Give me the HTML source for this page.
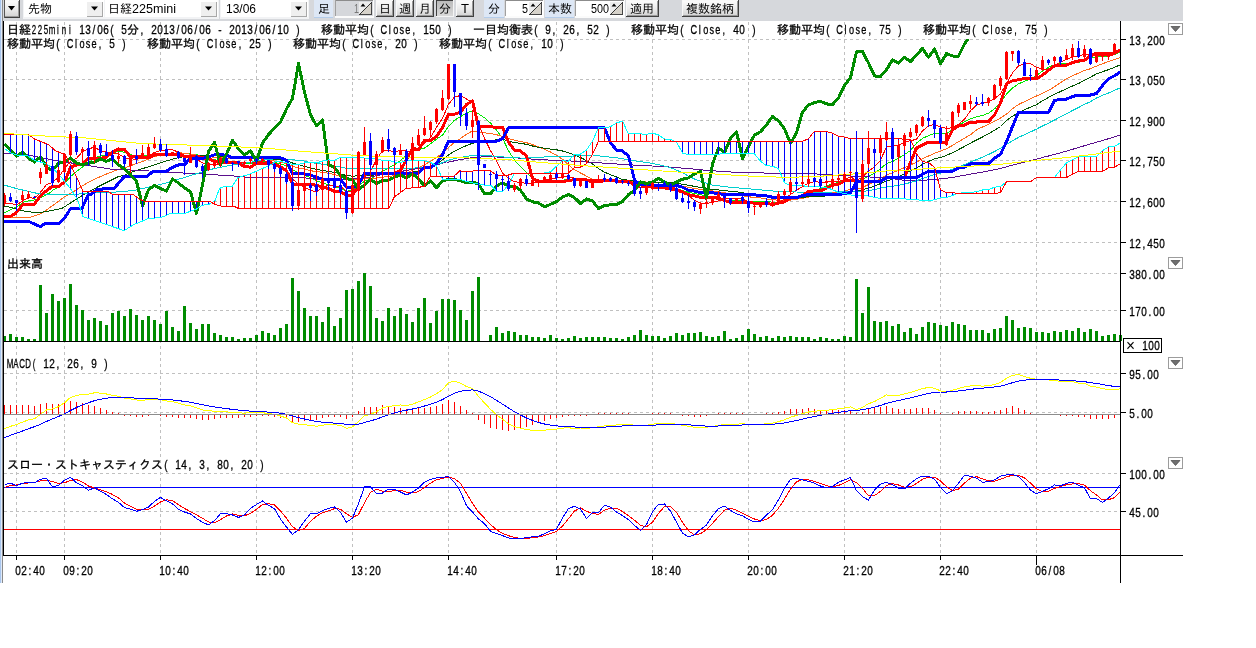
<!DOCTYPE html>
<html lang="ja"><head><meta charset="utf-8"><title>日経225mini チャート</title><style>html,body{margin:0;padding:0;background:#fff;overflow:hidden}svg text{white-space:pre}.k{font:12px "Liberation Mono","IPAGothic",monospace}.n,.h{font:12.5px "Liberation Sans","IPAGothic",sans-serif}.n{text-anchor:middle}.n,.h,.k{stroke:#000;stroke-width:.3px}#w{will-change:transform;width:1256px;height:648px}</style></head><body><div id="w"><svg width="1256" height="648" viewBox="0 0 1256 648" style="display:block">
<defs><linearGradient id="bg" x1="0" y1="0" x2="0" y2="1"><stop offset="0" stop-color="#fdfdfd"/><stop offset="0.5" stop-color="#ececec"/><stop offset="1" stop-color="#cfcfcf"/></linearGradient><linearGradient id="bp" x1="0" y1="0" x2="0" y2="1"><stop offset="0" stop-color="#b8b8b8"/><stop offset="1" stop-color="#dcdcdc"/></linearGradient></defs>
<rect x="0" y="0" width="1256" height="648" fill="#fff" />
<g shape-rendering="crispEdges">
<rect x="0" y="0" width="1183" height="21" fill="#d6d8dc" />
<rect x="0" y="0" width="1" height="583" fill="#a9c6ee" />
<rect x="1" y="0" width="1" height="583" fill="#dfe9f7" />
<rect x="2" y="0" width="1" height="583" fill="#8a8a8a" />
<rect x="4" y="0" width="16" height="18" fill="url(#bg)" />
<rect x="4" y="0" width="16" height="1" fill="#f8f8f8" />
<rect x="4" y="0" width="1" height="18" fill="#f8f8f8" />
<rect x="19" y="0" width="1" height="18" fill="#404040" />
<rect x="4" y="17" width="16" height="1" fill="#404040" />
<rect x="18" y="1" width="1" height="16" fill="#9a9a9a" />
<rect x="5" y="16" width="14" height="1" fill="#9a9a9a" />
<rect x="4" y="0" width="1" height="18" fill="#555" />
<polygon points="8.0,6 15.0,6 11.5,10.5" fill="#000" shape-rendering="auto"/>
<rect x="23" y="0" width="82" height="19" fill="#f2f3f5" />
<rect x="24" y="0" width="80" height="17" fill="#fff" />
<rect x="87" y="2" width="15" height="14" fill="#efefef" />
<rect x="102" y="2" width="1" height="15" fill="#a8a8a8" />
<rect x="87" y="16" width="16" height="1" fill="#a8a8a8" />
<polygon points="91.0,6.5 98.0,6.5 94.5,10.5" fill="#000" shape-rendering="auto"/>
<rect x="104" y="0" width="115" height="19" fill="#f2f3f5" />
<rect x="105" y="0" width="113" height="17" fill="#fff" />
<rect x="201" y="2" width="15" height="14" fill="#efefef" />
<rect x="216" y="2" width="1" height="15" fill="#a8a8a8" />
<rect x="201" y="16" width="16" height="1" fill="#a8a8a8" />
<polygon points="205.0,6.5 212.0,6.5 208.5,10.5" fill="#000" shape-rendering="auto"/>
<rect x="220" y="0" width="89" height="19" fill="#f2f3f5" />
<rect x="221" y="0" width="87" height="17" fill="#fff" />
<rect x="291" y="2" width="15" height="14" fill="#efefef" />
<rect x="306" y="2" width="1" height="15" fill="#a8a8a8" />
<rect x="291" y="16" width="16" height="1" fill="#a8a8a8" />
<polygon points="295.0,6.5 302.0,6.5 298.5,10.5" fill="#000" shape-rendering="auto"/>
<rect x="314" y="0" width="19" height="18" fill="#dde7f5" />
<rect x="314" y="17" width="19" height="1" fill="#b5cdea" />
<rect x="484" y="0" width="20" height="18" fill="#dde7f5" />
<rect x="484" y="17" width="20" height="1" fill="#b5cdea" />
<rect x="545" y="0" width="29" height="18" fill="#dde7f5" />
<rect x="545" y="17" width="29" height="1" fill="#b5cdea" />
<rect x="335" y="0" width="39" height="18" fill="#fbfbfb" />
<rect x="335" y="0" width="38" height="16" fill="#d5d7db" />
<rect x="335" y="0" width="38" height="1" fill="#8c8c8c" />
<rect x="335" y="0" width="1" height="16" fill="#a0a0a0" />
<polygon points="359,2 371,2 359,15" fill="#ececec"/>
<polygon points="371,2 371,15 359,15" fill="#d6d2ca"/>
<rect x="371" y="2" width="1" height="13" fill="#444" />
<rect x="359" y="14" width="13" height="1" fill="#444" />
<line x1="359.5" y1="14.5" x2="371.5" y2="2.5" stroke="#222" stroke-width="0.9" shape-rendering="auto"/>
<polygon points="360.5,6.5 365.5,6.5 363,3.5" fill="#000" shape-rendering="auto"/>
<rect x="505" y="0" width="39" height="18" fill="#fbfbfb" />
<rect x="505" y="0" width="38" height="16" fill="#fff" />
<rect x="505" y="0" width="38" height="1" fill="#8c8c8c" />
<rect x="505" y="0" width="1" height="16" fill="#a0a0a0" />
<polygon points="529,2 541,2 529,15" fill="#ececec"/>
<polygon points="541,2 541,15 529,15" fill="#d6d2ca"/>
<rect x="541" y="2" width="1" height="13" fill="#444" />
<rect x="529" y="14" width="13" height="1" fill="#444" />
<line x1="529.5" y1="14.5" x2="541.5" y2="2.5" stroke="#222" stroke-width="0.9" shape-rendering="auto"/>
<polygon points="530.5,6.5 535.5,6.5 533,3.5" fill="#000" shape-rendering="auto"/>
<rect x="575" y="0" width="50" height="18" fill="#fbfbfb" />
<rect x="575" y="0" width="49" height="16" fill="#fff" />
<rect x="575" y="0" width="49" height="1" fill="#8c8c8c" />
<rect x="575" y="0" width="1" height="16" fill="#a0a0a0" />
<polygon points="610,2 622,2 610,15" fill="#ececec"/>
<polygon points="622,2 622,15 610,15" fill="#d6d2ca"/>
<rect x="622" y="2" width="1" height="13" fill="#444" />
<rect x="610" y="14" width="13" height="1" fill="#444" />
<line x1="610.5" y1="14.5" x2="622.5" y2="2.5" stroke="#222" stroke-width="0.9" shape-rendering="auto"/>
<polygon points="611.5,6.5 616.5,6.5 614,3.5" fill="#000" shape-rendering="auto"/>
<rect x="376" y="0" width="18" height="17" fill="url(#bg)" />
<rect x="376" y="0" width="18" height="1" fill="#f8f8f8" />
<rect x="376" y="0" width="1" height="17" fill="#f8f8f8" />
<rect x="393" y="0" width="1" height="17" fill="#404040" />
<rect x="376" y="16" width="18" height="1" fill="#404040" />
<rect x="392" y="1" width="1" height="15" fill="#9a9a9a" />
<rect x="377" y="15" width="16" height="1" fill="#9a9a9a" />
<rect x="396" y="0" width="18" height="17" fill="url(#bg)" />
<rect x="396" y="0" width="18" height="1" fill="#f8f8f8" />
<rect x="396" y="0" width="1" height="17" fill="#f8f8f8" />
<rect x="413" y="0" width="1" height="17" fill="#404040" />
<rect x="396" y="16" width="18" height="1" fill="#404040" />
<rect x="412" y="1" width="1" height="15" fill="#9a9a9a" />
<rect x="397" y="15" width="16" height="1" fill="#9a9a9a" />
<rect x="416" y="0" width="18" height="17" fill="url(#bg)" />
<rect x="416" y="0" width="18" height="1" fill="#f8f8f8" />
<rect x="416" y="0" width="1" height="17" fill="#f8f8f8" />
<rect x="433" y="0" width="1" height="17" fill="#404040" />
<rect x="416" y="16" width="18" height="1" fill="#404040" />
<rect x="432" y="1" width="1" height="15" fill="#9a9a9a" />
<rect x="417" y="15" width="16" height="1" fill="#9a9a9a" />
<rect x="436" y="0" width="18" height="17" fill="url(#bp)" />
<rect x="436" y="0" width="18" height="1" fill="#404040" />
<rect x="436" y="0" width="1" height="17" fill="#404040" />
<rect x="453" y="0" width="1" height="17" fill="#f4f4f4" />
<rect x="436" y="16" width="18" height="1" fill="#f4f4f4" />
<rect x="456" y="0" width="18" height="17" fill="url(#bg)" />
<rect x="456" y="0" width="18" height="1" fill="#f8f8f8" />
<rect x="456" y="0" width="1" height="17" fill="#f8f8f8" />
<rect x="473" y="0" width="1" height="17" fill="#404040" />
<rect x="456" y="16" width="18" height="1" fill="#404040" />
<rect x="472" y="1" width="1" height="15" fill="#9a9a9a" />
<rect x="457" y="15" width="16" height="1" fill="#9a9a9a" />
<rect x="626" y="0" width="33" height="17" fill="url(#bg)" />
<rect x="626" y="0" width="33" height="1" fill="#f8f8f8" />
<rect x="626" y="0" width="1" height="17" fill="#f8f8f8" />
<rect x="658" y="0" width="1" height="17" fill="#404040" />
<rect x="626" y="16" width="33" height="1" fill="#404040" />
<rect x="657" y="1" width="1" height="15" fill="#9a9a9a" />
<rect x="627" y="15" width="31" height="1" fill="#9a9a9a" />
<rect x="682" y="0" width="57" height="17" fill="url(#bg)" />
<rect x="682" y="0" width="57" height="1" fill="#f8f8f8" />
<rect x="682" y="0" width="1" height="17" fill="#f8f8f8" />
<rect x="738" y="0" width="1" height="17" fill="#404040" />
<rect x="682" y="16" width="57" height="1" fill="#404040" />
<rect x="737" y="1" width="1" height="15" fill="#9a9a9a" />
<rect x="683" y="15" width="55" height="1" fill="#9a9a9a" />
</g>
<text x="28" y="13" font-family="'Liberation Sans','IPAGothic',sans-serif" font-size="12" fill="#000" textLength="24" lengthAdjust="spacingAndGlyphs">先物</text>
<text x="108" y="13" font-family="'Liberation Sans','IPAGothic',sans-serif" font-size="12" fill="#000" textLength="24" lengthAdjust="spacingAndGlyphs">日経</text>
<text x="132" y="13" font-family="'Liberation Sans','IPAGothic',sans-serif" font-size="12" fill="#000" textLength="44" lengthAdjust="spacingAndGlyphs">225mini</text>
<text x="226" y="13" font-family="'Liberation Sans','IPAGothic',sans-serif" font-size="12" fill="#000" textLength="30" lengthAdjust="spacingAndGlyphs">13/06</text>
<text x="318" y="13" font-family="'Liberation Sans','IPAGothic',sans-serif" font-size="12" fill="#000" textLength="12" lengthAdjust="spacingAndGlyphs">足</text>
<text x="354" y="13" font-family="'Liberation Sans','IPAGothic',sans-serif" font-size="12" fill="#777" textLength="5" lengthAdjust="spacingAndGlyphs">1</text>
<text x="379" y="13" font-family="'Liberation Sans','IPAGothic',sans-serif" font-size="12" fill="#000" textLength="12" lengthAdjust="spacingAndGlyphs">日</text>
<text x="399" y="13" font-family="'Liberation Sans','IPAGothic',sans-serif" font-size="12" fill="#000" textLength="12" lengthAdjust="spacingAndGlyphs">週</text>
<text x="419" y="13" font-family="'Liberation Sans','IPAGothic',sans-serif" font-size="12" fill="#000" textLength="12" lengthAdjust="spacingAndGlyphs">月</text>
<text x="439" y="13" font-family="'Liberation Sans','IPAGothic',sans-serif" font-size="12" fill="#000" textLength="12" lengthAdjust="spacingAndGlyphs">分</text>
<text x="461" y="13" font-family="'Liberation Sans','IPAGothic',sans-serif" font-size="12" fill="#000" textLength="8" lengthAdjust="spacingAndGlyphs">T</text>
<text x="488" y="13" font-family="'Liberation Sans','IPAGothic',sans-serif" font-size="12" fill="#000" textLength="12" lengthAdjust="spacingAndGlyphs">分</text>
<text x="522" y="13" font-family="'Liberation Sans','IPAGothic',sans-serif" font-size="12" fill="#000" textLength="6" lengthAdjust="spacingAndGlyphs">5</text>
<text x="548" y="13" font-family="'Liberation Sans','IPAGothic',sans-serif" font-size="12" fill="#000" textLength="24" lengthAdjust="spacingAndGlyphs">本数</text>
<text x="591" y="13" font-family="'Liberation Sans','IPAGothic',sans-serif" font-size="12" fill="#000" textLength="18" lengthAdjust="spacingAndGlyphs">500</text>
<text x="630" y="13" font-family="'Liberation Sans','IPAGothic',sans-serif" font-size="12" fill="#000" textLength="24" lengthAdjust="spacingAndGlyphs">適用</text>
<text x="686" y="13" font-family="'Liberation Sans','IPAGothic',sans-serif" font-size="12" fill="#000" textLength="48" lengthAdjust="spacingAndGlyphs">複数銘柄</text>
<g shape-rendering="crispEdges">
<line x1="16.5" y1="22" x2="16.5" y2="555" stroke="#c0c0c0" stroke-width="1" stroke-dasharray="3,3"/>
<line x1="64.5" y1="22" x2="64.5" y2="555" stroke="#c0c0c0" stroke-width="1" stroke-dasharray="3,3"/>
<line x1="160.5" y1="22" x2="160.5" y2="555" stroke="#c0c0c0" stroke-width="1" stroke-dasharray="3,3"/>
<line x1="256.5" y1="22" x2="256.5" y2="555" stroke="#c0c0c0" stroke-width="1" stroke-dasharray="3,3"/>
<line x1="352.5" y1="22" x2="352.5" y2="555" stroke="#c0c0c0" stroke-width="1" stroke-dasharray="3,3"/>
<line x1="448.5" y1="22" x2="448.5" y2="555" stroke="#c0c0c0" stroke-width="1" stroke-dasharray="3,3"/>
<line x1="556.5" y1="22" x2="556.5" y2="555" stroke="#c0c0c0" stroke-width="1" stroke-dasharray="3,3"/>
<line x1="652.5" y1="22" x2="652.5" y2="555" stroke="#c0c0c0" stroke-width="1" stroke-dasharray="3,3"/>
<line x1="748.5" y1="22" x2="748.5" y2="555" stroke="#c0c0c0" stroke-width="1" stroke-dasharray="3,3"/>
<line x1="844.5" y1="22" x2="844.5" y2="555" stroke="#c0c0c0" stroke-width="1" stroke-dasharray="3,3"/>
<line x1="940.5" y1="22" x2="940.5" y2="555" stroke="#c0c0c0" stroke-width="1" stroke-dasharray="3,3"/>
<line x1="1036.5" y1="22" x2="1036.5" y2="555" stroke="#c0c0c0" stroke-width="1" stroke-dasharray="3,3"/>
<line x1="4" y1="39.5" x2="1120" y2="39.5" stroke="#c0c0c0" stroke-width="1" stroke-dasharray="3,3"/>
<line x1="4" y1="79.5" x2="1120" y2="79.5" stroke="#c0c0c0" stroke-width="1" stroke-dasharray="3,3"/>
<line x1="4" y1="120.5" x2="1120" y2="120.5" stroke="#c0c0c0" stroke-width="1" stroke-dasharray="3,3"/>
<line x1="4" y1="160.5" x2="1120" y2="160.5" stroke="#c0c0c0" stroke-width="1" stroke-dasharray="3,3"/>
<line x1="4" y1="201.5" x2="1120" y2="201.5" stroke="#c0c0c0" stroke-width="1" stroke-dasharray="3,3"/>
<line x1="4" y1="242.5" x2="1120" y2="242.5" stroke="#c0c0c0" stroke-width="1" stroke-dasharray="3,3"/>
<line x1="4" y1="273.5" x2="1120" y2="273.5" stroke="#c0c0c0" stroke-width="1" stroke-dasharray="3,3"/>
<line x1="4" y1="310.5" x2="1120" y2="310.5" stroke="#c0c0c0" stroke-width="1" stroke-dasharray="3,3"/>
<line x1="4" y1="373.5" x2="1120" y2="373.5" stroke="#c0c0c0" stroke-width="1" stroke-dasharray="3,3"/>
<line x1="4" y1="412.5" x2="1120" y2="412.5" stroke="#c0c0c0" stroke-width="1" stroke-dasharray="3,3"/>
<line x1="4" y1="473.5" x2="1120" y2="473.5" stroke="#c0c0c0" stroke-width="1" stroke-dasharray="3,3"/>
<line x1="4" y1="511.5" x2="1120" y2="511.5" stroke="#c0c0c0" stroke-width="1" stroke-dasharray="3,3"/>
</g>
<clipPath id="cm"><rect x="4" y="39" width="1116" height="215"/></clipPath>
<g clip-path="url(#cm)">
<g shape-rendering="crispEdges">
<polyline points="4.0,213.0 10.4,209.9 18.6,205.7 24.8,201.6 34.2,200.0 41.4,197.4 51.8,191.7 52.5,190.1 58.5,187.5 64.5,183.5 70.5,176.7 76.5,171.6 82.5,166.9 88.5,163.2 94.5,157.9 100.5,156.0 106.5,155.1 112.5,152.8 118.5,151.4 124.5,152.3 130.5,154.8 136.5,155.6 142.5,156.0 148.5,155.1 154.5,155.0 160.5,154.7 166.5,154.7 172.5,153.9 178.5,154.2 184.5,154.0 190.5,153.9 196.5,154.6 202.5,156.4 208.5,158.0 214.5,159.8 220.5,160.7 226.5,161.3 232.5,162.6 238.5,163.1 244.5,163.1 250.5,163.3 256.5,162.7 262.5,161.5 268.5,161.7 274.5,162.4 280.5,164.0 286.5,165.9 292.5,170.0 298.5,172.6 304.5,175.0 310.5,177.9 316.5,180.9 322.5,182.9 328.5,184.7 334.5,186.6 340.5,188.3 346.5,191.5 352.5,189.5 358.5,185.6 364.5,181.3 370.5,179.0 376.5,175.3 382.5,171.4 388.5,168.0 394.5,164.7 400.5,160.6 406.5,155.4 412.5,151.2 418.5,149.5 424.5,148.1 430.5,143.8 436.5,139.3 442.5,135.1 448.5,126.5 454.5,120.2 460.5,116.6 466.5,113.1 472.5,110.8 478.5,113.8 484.5,117.8 490.5,123.1 496.5,130.1 502.5,138.2 508.5,150.8 514.5,160.1 520.5,166.5 526.5,172.3 532.5,178.4 538.5,179.9 544.5,180.9 550.5,180.8 556.5,180.8 562.5,180.2 568.5,179.1 574.5,179.2 580.5,179.4 586.5,179.8 592.5,179.8 598.5,179.8 604.5,180.0 610.5,180.6 616.5,181.1 622.5,181.9 628.5,182.4 634.5,183.1 640.5,184.5 646.5,184.3 652.5,184.5 658.5,185.2 664.5,185.8 670.5,186.8 676.5,188.4 682.5,190.4 688.5,192.3 694.5,193.6 700.5,194.6 706.5,196.2 712.5,197.6 718.5,198.4 724.5,199.6 730.5,200.9 736.5,200.9 742.5,200.8 748.5,201.4 754.5,201.2 760.5,201.3 766.5,201.6 772.5,202.1 778.5,202.1 784.5,201.4 790.5,199.2 796.5,197.7 802.5,195.8 808.5,192.8 814.5,190.4 820.5,188.5 826.5,186.2 832.5,183.9 838.5,182.3 844.5,180.6 850.5,179.6 856.5,181.1 862.5,179.3 868.5,176.2 874.5,173.3 880.5,168.6 886.5,163.6 892.5,161.5 898.5,158.4 904.5,154.5 910.5,150.5 916.5,143.1 922.5,138.4 928.5,135.7 934.5,133.3 940.5,133.8 946.5,133.9 952.5,129.3 958.5,125.1 964.5,121.9 970.5,118.8 976.5,116.7 982.5,115.5 988.5,113.2 994.5,108.9 1000.5,102.3 1006.5,94.2 1012.5,88.1 1018.5,83.9 1024.5,81.3 1030.5,78.8 1036.5,75.4 1042.5,70.9 1048.5,67.4 1054.5,64.6 1060.5,63.0 1066.5,63.3 1072.5,63.0 1078.5,62.5 1084.5,59.8 1090.5,58.5 1096.5,56.9 1102.5,56.5 1108.5,55.8 1114.5,54.5 1120.5,51.8" fill="none" stroke="#00e800" stroke-width="1" stroke-linejoin="round" stroke-linecap="butt"/>
<polyline points="4.0,216.5 13.5,217.4 30.0,217.4 41.4,213.5 51.8,206.2 64.2,196.9 72.5,192.3 82.8,185.5 93.2,179.8 103.5,175.2 117.0,170.0 118.5,169.5 124.5,167.9 130.5,165.7 136.5,163.6 142.5,161.5 148.5,159.1 154.5,156.4 160.5,155.3 166.5,154.9 172.5,153.4 178.5,152.8 184.5,153.2 190.5,154.3 196.5,155.1 202.5,156.2 208.5,156.5 214.5,157.4 220.5,157.7 226.5,158.0 232.5,158.3 238.5,158.6 244.5,158.5 250.5,158.6 256.5,158.7 262.5,159.0 268.5,159.9 274.5,161.1 280.5,162.3 286.5,163.6 292.5,166.3 298.5,167.9 304.5,169.0 310.5,170.6 316.5,171.8 322.5,172.2 328.5,173.2 334.5,174.5 340.5,176.2 346.5,178.7 352.5,179.7 358.5,179.1 364.5,178.2 370.5,178.5 376.5,178.1 382.5,177.2 388.5,176.4 394.5,175.7 400.5,174.5 406.5,173.5 412.5,170.3 418.5,167.6 424.5,164.7 430.5,161.4 436.5,157.3 442.5,153.2 448.5,147.3 454.5,142.5 460.5,138.6 466.5,134.2 472.5,131.0 478.5,131.6 484.5,132.9 490.5,133.4 496.5,134.7 502.5,136.6 508.5,138.7 514.5,140.2 520.5,141.6 526.5,142.7 532.5,144.6 538.5,146.9 544.5,149.3 550.5,152.0 556.5,155.4 562.5,159.2 568.5,165.0 574.5,169.7 580.5,173.0 586.5,176.1 592.5,179.1 598.5,179.8 604.5,180.4 610.5,180.7 616.5,180.9 622.5,181.0 628.5,180.8 634.5,181.2 640.5,181.9 646.5,182.0 652.5,182.1 658.5,182.5 664.5,182.9 670.5,183.7 676.5,184.7 682.5,186.1 688.5,187.3 694.5,188.4 700.5,189.5 706.5,190.2 712.5,191.0 718.5,191.8 724.5,192.7 730.5,193.8 736.5,194.6 742.5,195.6 748.5,196.8 754.5,197.4 760.5,198.0 766.5,198.9 772.5,199.8 778.5,200.2 784.5,200.5 790.5,200.1 796.5,199.3 802.5,198.3 808.5,197.1 814.5,195.8 820.5,194.9 826.5,193.9 832.5,193.0 838.5,192.2 844.5,191.0 850.5,189.4 856.5,189.4 862.5,187.5 868.5,184.5 874.5,181.8 880.5,178.5 886.5,174.9 892.5,172.7 898.5,170.3 904.5,167.5 910.5,165.0 916.5,162.1 922.5,158.8 928.5,156.0 934.5,153.3 940.5,151.2 946.5,148.7 952.5,145.4 958.5,141.7 964.5,138.2 970.5,134.7 976.5,129.9 982.5,127.0 988.5,124.5 994.5,121.1 1000.5,118.1 1006.5,114.1 1012.5,108.7 1018.5,104.5 1024.5,101.6 1030.5,98.8 1036.5,96.0 1042.5,93.2 1048.5,90.3 1054.5,86.8 1060.5,82.7 1066.5,78.8 1072.5,75.6 1078.5,73.2 1084.5,70.5 1090.5,68.7 1096.5,66.1 1102.5,63.7 1108.5,61.6 1114.5,59.6 1120.5,57.4" fill="none" stroke="#ff6a1a" stroke-width="1" stroke-linejoin="round" stroke-linecap="butt"/>
<polyline points="4.0,206.2 10.4,207.3 20.7,210.4 33.1,212.4 42.4,212.2 51.8,210.4 62.1,208.3 70.4,203.1 80.7,196.4 88.0,192.3 98.3,186.6 108.7,181.4 118.0,176.7 124.2,175.2 136.0,170.5 148.0,167.0 148.5,166.8 154.5,164.8 160.5,162.7 166.5,160.9 172.5,159.2 178.5,157.7 184.5,156.3 190.5,155.7 196.5,155.8 202.5,155.3 208.5,155.0 214.5,155.3 220.5,156.3 226.5,156.8 232.5,157.4 238.5,157.7 244.5,158.4 250.5,158.6 256.5,158.8 262.5,158.8 268.5,159.2 274.5,159.3 280.5,160.0 286.5,160.9 292.5,163.0 298.5,164.7 304.5,166.4 310.5,167.9 316.5,169.3 322.5,170.4 328.5,171.4 334.5,172.4 340.5,173.8 346.5,175.6 352.5,176.2 358.5,175.7 364.5,175.0 370.5,175.2 376.5,174.9 382.5,173.9 388.5,173.3 394.5,173.0 400.5,172.7 406.5,172.7 412.5,172.1 418.5,170.9 424.5,169.2 430.5,167.1 436.5,164.2 442.5,159.9 448.5,154.9 454.5,151.1 460.5,148.2 466.5,145.6 472.5,143.2 478.5,142.5 484.5,141.7 490.5,141.0 496.5,139.6 502.5,139.4 508.5,140.9 514.5,142.7 520.5,143.2 526.5,144.4 532.5,146.0 538.5,147.3 544.5,148.2 550.5,149.1 556.5,149.8 562.5,151.0 568.5,152.8 574.5,155.1 580.5,157.5 586.5,160.6 592.5,163.9 598.5,168.6 604.5,172.1 610.5,174.7 616.5,177.0 622.5,179.5 628.5,180.2 634.5,181.3 640.5,182.0 646.5,182.3 652.5,182.4 658.5,182.3 664.5,182.3 670.5,182.8 676.5,183.4 682.5,184.2 688.5,185.2 694.5,186.4 700.5,187.5 706.5,188.5 712.5,189.4 718.5,190.0 724.5,190.5 730.5,191.4 736.5,191.8 742.5,192.7 748.5,193.8 754.5,194.9 760.5,195.8 766.5,196.7 772.5,197.5 778.5,197.9 784.5,197.8 790.5,197.3 796.5,197.2 802.5,197.2 808.5,196.9 814.5,196.7 820.5,196.5 826.5,195.8 832.5,194.9 838.5,193.9 844.5,192.6 850.5,191.3 856.5,191.2 862.5,189.8 868.5,188.0 874.5,186.2 880.5,183.6 886.5,180.9 892.5,179.2 898.5,176.7 904.5,173.9 910.5,171.0 916.5,167.8 922.5,164.4 928.5,161.4 934.5,158.9 940.5,157.4 946.5,155.4 952.5,152.6 958.5,149.6 964.5,146.5 970.5,143.1 976.5,140.0 982.5,137.0 988.5,133.8 994.5,130.3 1000.5,126.5 1006.5,120.6 1012.5,116.1 1018.5,112.7 1024.5,109.7 1030.5,107.2 1036.5,104.7 1042.5,100.8 1048.5,97.4 1054.5,94.3 1060.5,91.5 1066.5,88.7 1072.5,86.0 1078.5,83.5 1084.5,80.3 1090.5,77.1 1096.5,73.9 1102.5,71.7 1108.5,69.7 1114.5,67.4 1120.5,64.7" fill="none" stroke="#005500" stroke-width="1" stroke-linejoin="round" stroke-linecap="butt"/>
<polyline points="4.0,203.6 17.6,204.2 24.0,200.0 28.5,197.7 34.5,198.2 40.5,192.3 46.5,184.7 52.5,182.3 58.5,177.4 64.5,168.7 70.5,161.1 76.5,158.4 82.5,151.6 88.5,149.0 94.5,147.0 100.5,150.9 106.5,151.8 112.5,154.0 118.5,153.8 124.5,157.7 130.5,158.7 136.5,159.4 142.5,158.0 148.5,156.3 154.5,152.3 160.5,150.7 166.5,150.0 172.5,149.9 178.5,152.1 184.5,155.7 190.5,157.1 196.5,159.2 202.5,163.0 208.5,164.0 214.5,164.0 220.5,164.2 226.5,163.5 232.5,162.2 238.5,162.2 244.5,162.2 250.5,162.4 256.5,162.0 262.5,160.9 268.5,161.2 274.5,162.6 280.5,165.7 286.5,169.7 292.5,179.1 298.5,184.1 304.5,187.4 310.5,190.2 316.5,192.1 322.5,186.7 328.5,185.4 334.5,185.9 340.5,186.5 346.5,191.0 352.5,192.2 358.5,185.9 364.5,176.8 370.5,171.4 376.5,159.6 382.5,150.6 388.5,150.1 394.5,152.6 400.5,149.8 406.5,151.2 412.5,151.7 418.5,148.9 424.5,143.5 430.5,137.7 436.5,127.3 442.5,118.4 448.5,104.2 454.5,97.0 460.5,95.5 466.5,98.9 472.5,103.2 478.5,123.4 484.5,138.5 490.5,150.6 496.5,161.2 502.5,173.2 508.5,178.2 514.5,181.7 520.5,182.4 526.5,183.4 532.5,183.6 538.5,181.7 544.5,180.1 550.5,179.3 556.5,178.1 562.5,176.8 568.5,176.6 574.5,178.3 580.5,179.5 586.5,181.4 592.5,182.8 598.5,183.0 604.5,181.7 610.5,181.7 616.5,180.7 622.5,180.9 628.5,181.8 634.5,184.6 640.5,187.2 646.5,187.9 652.5,188.0 658.5,188.5 664.5,187.0 670.5,186.3 676.5,188.9 682.5,192.7 688.5,196.0 694.5,200.2 700.5,203.0 706.5,203.5 712.5,202.5 718.5,200.8 724.5,199.0 730.5,198.8 736.5,198.3 742.5,199.1 748.5,201.9 754.5,203.5 760.5,203.8 766.5,204.9 772.5,205.0 778.5,202.2 784.5,199.2 790.5,194.6 796.5,190.4 802.5,186.5 808.5,183.3 814.5,181.5 820.5,182.3 826.5,181.9 832.5,181.4 838.5,181.3 844.5,179.7 850.5,176.9 856.5,180.2 862.5,177.1 868.5,171.1 874.5,166.9 880.5,160.2 886.5,146.9 892.5,145.9 898.5,145.6 904.5,142.0 910.5,140.7 916.5,139.3 922.5,130.9 928.5,125.8 934.5,124.6 940.5,126.9 946.5,128.5 952.5,127.6 958.5,124.4 964.5,119.2 970.5,110.8 976.5,104.9 982.5,103.4 988.5,102.0 994.5,98.6 1000.5,93.9 1006.5,83.5 1012.5,72.9 1018.5,65.9 1024.5,64.0 1030.5,63.7 1036.5,67.3 1042.5,69.0 1048.5,69.0 1054.5,65.3 1060.5,62.3 1066.5,59.4 1072.5,57.1 1078.5,56.0 1084.5,54.3 1090.5,54.7 1096.5,54.5 1102.5,56.0 1108.5,55.7 1114.5,54.7 1120.5,48.9" fill="none" stroke="#ff0000" stroke-width="1" stroke-linejoin="round" stroke-linecap="butt"/>
<polyline points="4.2,153.0 27.8,155.0 55.6,160.6 83.3,164.8 110.0,169.0 141.0,170.5 179.4,172.8 202.6,174.0 233.5,176.0 249.0,177.5 301.7,177.5 321.7,179.8 345.0,179.5 368.0,177.5 383.5,174.4 420.0,168.2 435.5,165.4 446.3,162.0 448.5,162.1 454.5,160.8 460.5,159.6 466.5,158.6 472.5,157.6 478.5,157.2 484.5,156.8 490.5,156.8 496.5,157.0 502.5,157.0 508.5,157.2 514.5,157.6 520.5,158.3 526.5,158.7 532.5,159.1 538.5,159.4 544.5,159.9 550.5,160.1 556.5,160.4 562.5,160.6 568.5,160.9 574.5,161.2 580.5,161.5 586.5,161.9 592.5,162.3 598.5,162.7 604.5,163.2 610.5,163.6 616.5,164.0 622.5,164.4 628.5,164.7 634.5,165.1 640.5,165.6 646.5,165.9 652.5,166.0 658.5,166.3 664.5,166.7 670.5,167.1 676.5,167.6 682.5,168.1 688.5,168.6 694.5,169.2 700.5,169.8 706.5,170.3 712.5,170.8 718.5,171.2 724.5,171.6 730.5,172.0 736.5,172.2 742.5,172.2 748.5,172.4 754.5,172.7 760.5,172.9 766.5,173.1 772.5,173.4 778.5,173.5 784.5,173.6 790.5,173.4 796.5,173.1 802.5,173.0 808.5,173.4 814.5,173.9 820.5,174.2 826.5,174.5 832.5,175.1 838.5,175.4 844.5,175.7 850.5,176.0 856.5,176.5 862.5,176.8 868.5,176.9 874.5,177.3 880.5,177.5 886.5,177.8 892.5,178.6 898.5,179.7 904.5,180.3 910.5,180.5 916.5,180.5 922.5,180.4 928.5,179.9 934.5,179.3 940.5,178.9 946.5,178.3 952.5,177.4 958.5,176.3 964.5,175.2 970.5,174.1 976.5,173.1 982.5,172.1 988.5,171.0 994.5,169.7 1000.5,168.4 1006.5,166.8 1012.5,165.1 1018.5,163.6 1024.5,162.1 1030.5,160.7 1036.5,159.1 1042.5,157.5 1048.5,156.0 1054.5,154.4 1060.5,152.8 1066.5,151.1 1072.5,149.3 1078.5,147.6 1084.5,145.7 1090.5,143.9 1096.5,142.2 1102.5,140.5 1108.5,138.7 1114.5,136.8 1120.5,134.8" fill="none" stroke="#5a0f8c" stroke-width="1" stroke-linejoin="round" stroke-linecap="butt"/>
<polyline points="4.0,185.0 16.6,188.6 34.2,192.8 46.6,194.8 72.5,194.3 82.8,193.8 103.5,192.3 110.0,192.5 133.0,190.6 161.0,184.4 187.0,176.7 208.8,169.8 233.5,164.6 238.5,164.1 244.5,163.2 250.5,162.2 256.5,161.1 262.5,160.2 268.5,159.5 274.5,158.8 280.5,158.8 286.5,159.3 292.5,159.8 298.5,160.3 304.5,161.1 310.5,162.5 316.5,163.5 322.5,164.2 328.5,164.9 334.5,166.0 340.5,166.9 346.5,168.4 352.5,169.0 358.5,168.9 364.5,168.3 370.5,168.5 376.5,168.4 382.5,168.1 388.5,168.1 394.5,168.4 400.5,168.4 406.5,168.5 412.5,168.3 418.5,167.7 424.5,166.9 430.5,166.0 436.5,164.5 442.5,162.7 448.5,160.2 454.5,158.5 460.5,157.4 466.5,156.5 472.5,155.4 478.5,155.4 484.5,155.5 490.5,155.9 496.5,156.4 502.5,156.9 508.5,157.5 514.5,157.9 520.5,158.0 526.5,158.1 532.5,157.5 538.5,157.2 544.5,157.0 550.5,156.7 556.5,156.3 562.5,156.2 568.5,156.1 574.5,156.1 580.5,155.8 586.5,155.2 592.5,155.0 598.5,155.7 604.5,156.7 610.5,157.1 616.5,157.8 622.5,158.8 628.5,159.7 634.5,160.7 640.5,161.7 646.5,162.4 652.5,163.4 658.5,164.7 664.5,166.1 670.5,167.8 676.5,170.1 682.5,172.7 688.5,176.1 694.5,179.0 700.5,181.2 706.5,183.1 712.5,185.1 718.5,185.8 724.5,186.6 730.5,187.3 736.5,187.8 742.5,188.3 748.5,188.8 754.5,189.3 760.5,189.9 766.5,190.5 772.5,191.0 778.5,191.4 784.5,191.7 790.5,191.9 796.5,192.0 802.5,192.2 808.5,192.2 814.5,192.1 820.5,192.2 826.5,192.1 832.5,192.0 838.5,192.0 844.5,191.8 850.5,191.6 856.5,192.0 862.5,191.6 868.5,190.6 874.5,189.6 880.5,188.2 886.5,186.9 892.5,186.3 898.5,185.3 904.5,184.0 910.5,182.5 916.5,180.7 922.5,178.6 928.5,176.5 934.5,174.6 940.5,173.0 946.5,171.3 952.5,169.2 958.5,167.0 964.5,164.6 970.5,162.0 976.5,159.6 982.5,157.2 988.5,154.5 994.5,151.5 1000.5,148.3 1006.5,144.5 1012.5,140.7 1018.5,137.4 1024.5,134.6 1030.5,131.9 1036.5,129.1 1042.5,126.0 1048.5,123.1 1054.5,120.0 1060.5,116.9 1066.5,113.8 1072.5,110.5 1078.5,107.5 1084.5,104.4 1090.5,101.7 1096.5,98.0 1102.5,95.3 1108.5,93.0 1114.5,90.3 1120.5,87.7" fill="none" stroke="#00cfcf" stroke-width="1" stroke-linejoin="round" stroke-linecap="butt"/>
</g>
<g shape-rendering="crispEdges">
<polyline points="4.0,216.6 10.4,216.4 15.5,213.5 22.8,204.7 34.2,204.2 41.4,194.8 51.8,186.6 52.5,186.5 58.5,186.5 64.5,182.0 70.5,167.3 76.5,164.9 82.5,164.5 88.5,158.3 94.5,158.3 100.5,158.3 106.5,157.0 112.5,152.0 118.5,149.0 124.5,149.5 130.5,156.9 136.5,156.9 142.5,156.9 148.5,157.9 154.5,154.9 160.5,154.9 166.5,154.9 172.5,154.9 178.5,154.9 184.5,156.2 190.5,156.2 196.5,156.2 202.5,157.8 208.5,158.8 214.5,161.2 220.5,162.9 226.5,162.9 232.5,162.9 238.5,162.9 244.5,166.8 250.5,167.1 256.5,163.3 262.5,163.2 268.5,163.2 274.5,163.8 280.5,167.2 286.5,170.8 292.5,184.2 298.5,184.2 304.5,184.2 310.5,184.4 316.5,185.3 322.5,186.9 328.5,188.5 334.5,191.4 340.5,191.4 346.5,195.5 352.5,195.5 358.5,185.0 364.5,173.0 370.5,173.0 376.5,173.0 382.5,173.0 388.5,173.0 394.5,173.0 400.5,170.5 406.5,159.3 412.5,148.5 418.5,149.5 424.5,140.5 430.5,140.5 436.5,136.5 442.5,127.5 448.5,114.2 454.5,114.2 460.5,112.2 466.5,104.5 472.5,101.0 478.5,126.7 484.5,126.7 490.5,126.7 496.5,127.4 502.5,127.4 508.5,142.2 514.5,150.2 520.5,151.0 526.5,156.0 532.5,178.2 538.5,181.5 544.5,181.5 550.5,181.8 556.5,181.8 562.5,181.8 568.5,180.4 574.5,179.8 580.5,179.8 586.5,180.0 592.5,180.0 598.5,180.0 604.5,180.0 610.5,180.0 616.5,181.2 622.5,181.4 628.5,181.4 634.5,185.1 640.5,186.5 646.5,186.5 652.5,186.5 658.5,187.8 664.5,187.8 670.5,189.1 676.5,190.2 682.5,191.9 688.5,194.8 694.5,195.8 700.5,197.4 706.5,197.4 712.5,197.4 718.5,198.3 724.5,200.4 730.5,202.6 736.5,202.6 742.5,202.6 748.5,202.6 754.5,203.1 760.5,203.1 766.5,203.1 772.5,204.7 778.5,203.1 784.5,201.9 790.5,197.7 796.5,197.7 802.5,195.4 808.5,191.6 814.5,190.8 820.5,190.8 826.5,188.3 832.5,185.2 838.5,184.3 844.5,181.1 850.5,180.2 856.5,181.6 862.5,181.6 868.5,181.6 874.5,181.6 880.5,181.6 886.5,177.5 892.5,177.5 898.5,177.5 904.5,177.5 910.5,162.1 916.5,148.2 922.5,145.0 928.5,142.0 934.5,142.0 940.5,142.0 946.5,142.0 952.5,130.0 958.5,126.0 964.5,125.2 970.5,122.0 976.5,122.0 982.5,121.7 988.5,121.7 994.5,115.0 1000.5,103.0 1006.5,83.8 1012.5,80.8 1018.5,79.8 1024.5,78.5 1030.5,78.5 1036.5,78.5 1042.5,75.2 1048.5,70.2 1054.5,65.8 1060.5,65.8 1066.5,65.0 1072.5,62.5 1078.5,61.0 1084.5,60.2 1090.5,55.9 1096.5,53.0 1102.5,53.0 1108.5,53.0 1114.5,53.0 1120.5,49.8" fill="none" stroke="#ff0000" stroke-width="3" stroke-linejoin="round" stroke-linecap="butt"/>
<polyline points="4.0,221.2 28.0,221.2 40.4,226.7 45.5,223.3 59.0,223.3 64.2,218.7 70.4,208.8 81.8,208.8 88.0,195.4 92.0,193.8 97.3,189.2 113.9,188.6 124.2,176.7 147.0,176.6 153.3,171.0 154.5,171.0 160.5,171.0 166.5,171.0 172.5,167.3 178.5,164.9 184.5,164.5 190.5,158.3 196.5,158.3 202.5,158.3 208.5,157.0 214.5,154.8 220.5,154.8 226.5,155.2 232.5,157.8 238.5,157.8 244.5,157.8 250.5,157.8 256.5,157.8 262.5,157.8 268.5,157.8 274.5,157.8 280.5,157.8 286.5,160.5 292.5,173.9 298.5,173.9 304.5,173.9 310.5,174.9 316.5,177.4 322.5,179.1 328.5,179.1 334.5,179.1 340.5,179.1 346.5,187.0 352.5,187.3 358.5,185.0 364.5,173.0 370.5,173.0 376.5,173.0 382.5,173.0 388.5,173.0 394.5,173.0 400.5,173.0 406.5,173.0 412.5,173.0 418.5,173.0 424.5,167.5 430.5,167.5 436.5,163.5 442.5,154.5 448.5,141.2 454.5,141.2 460.5,141.2 466.5,141.2 472.5,141.2 478.5,141.2 484.5,141.2 490.5,141.2 496.5,141.2 502.5,138.8 508.5,127.6 514.5,127.8 520.5,127.8 526.5,127.8 532.5,127.8 538.5,127.8 544.5,127.8 550.5,127.8 556.5,127.8 562.5,127.8 568.5,127.8 574.5,127.8 580.5,127.8 586.5,127.8 592.5,127.8 598.5,127.8 604.5,127.8 610.5,142.5 616.5,150.2 622.5,151.0 628.5,156.0 634.5,180.2 640.5,184.8 646.5,184.8 652.5,185.1 658.5,185.1 664.5,185.1 670.5,185.1 676.5,185.5 682.5,187.2 688.5,190.2 694.5,191.1 700.5,192.7 706.5,192.7 712.5,192.7 718.5,193.9 724.5,194.2 730.5,194.2 736.5,194.2 742.5,194.2 748.5,194.2 754.5,194.7 760.5,195.9 766.5,195.9 772.5,197.2 778.5,197.9 784.5,197.9 790.5,197.7 796.5,197.7 802.5,195.4 808.5,194.8 814.5,194.8 820.5,194.8 826.5,194.8 832.5,194.8 838.5,194.8 844.5,193.2 850.5,192.9 856.5,181.6 862.5,181.6 868.5,181.6 874.5,181.6 880.5,181.6 886.5,177.5 892.5,177.5 898.5,177.5 904.5,177.5 910.5,177.5 916.5,177.5 922.5,174.3 928.5,171.3 934.5,171.3 940.5,171.3 946.5,171.3 952.5,171.3 958.5,167.8 964.5,167.1 970.5,163.8 976.5,163.8 982.5,163.5 988.5,163.5 994.5,158.3 1000.5,154.3 1006.5,141.8 1012.5,126.5 1018.5,112.2 1024.5,112.2 1030.5,112.2 1036.5,112.2 1042.5,112.2 1048.5,112.2 1054.5,100.2 1060.5,99.8 1066.5,99.0 1072.5,96.5 1078.5,95.0 1084.5,95.0 1090.5,95.0 1096.5,93.5 1102.5,85.5 1108.5,78.8 1114.5,75.8 1120.5,71.8" fill="none" stroke="#0000ff" stroke-width="3" stroke-linejoin="round" stroke-linecap="butt"/>
<polyline points="4.5,143.9 10.5,149.8 16.5,156.2 22.5,152.3 28.5,158.1 34.5,162.0 40.5,156.8 46.5,167.0 52.5,170.9 58.5,163.2 64.5,162.0 70.5,158.0 76.5,163.2 82.5,164.5 88.5,163.2 94.5,162.0 100.5,159.0 106.5,161.3 112.5,158.8 118.5,165.0 124.5,168.8 130.5,174.5 136.5,181.5 142.5,205.7 148.5,189.8 154.5,185.3 160.5,188.5 166.5,191.0 172.5,179.0 178.5,183.0 184.5,187.9 190.5,191.7 196.5,213.3 202.5,185.0 208.5,151.6 214.5,142.3 220.5,165.0 226.5,154.0 232.5,140.3 238.5,149.0 244.5,154.7 250.5,151.0 256.5,161.0 262.5,143.0 268.5,134.6 274.5,128.0 280.5,122.0 286.5,109.0 292.5,98.3 298.5,63.5 304.5,92.0 310.5,114.9 316.5,125.7 322.5,120.0 328.5,164.6 334.5,167.5 340.5,175.4 346.5,178.6 352.5,179.9 358.5,189.4 364.5,185.0 370.5,179.2 376.5,183.7 382.5,180.5 388.5,180.0 394.5,177.3 400.5,174.8 406.5,178.0 412.5,173.8 418.5,178.9 424.5,185.9 430.5,180.8 436.5,187.8 442.5,180.8 448.5,179.5 454.5,179.5 460.5,180.8 466.5,182.7 472.5,182.0 478.5,184.0 484.5,193.5 490.5,194.0 496.5,185.9 502.5,182.7 508.5,186.5 514.5,186.0 520.5,190.3 526.5,198.9 532.5,201.8 538.5,203.0 544.5,206.9 550.5,204.3 556.5,201.5 562.5,197.0 568.5,194.5 574.5,197.7 580.5,203.4 586.5,199.0 592.5,200.9 598.5,208.5 604.5,205.7 610.5,204.7 616.5,204.7 622.5,201.5 628.5,194.5 634.5,190.7 640.5,181.8 646.5,183.7 652.5,181.8 658.5,178.6 664.5,181.8 670.5,185.6 676.5,181.8 682.5,179.2 688.5,177.9 694.5,174.0 700.5,171.6 706.5,198.3 712.5,163.9 718.5,147.8 724.5,152.9 730.5,138.2 736.5,131.8 742.5,158.6 748.5,146.5 754.5,135.0 760.5,131.8 766.5,124.8 772.5,116.6 778.5,121.0 784.5,128.7 790.5,143.3 796.5,133.0 802.5,112.0 808.5,105.0 814.5,102.5 820.5,101.3 826.5,103.9 832.5,104.5 838.5,98.0 844.5,85.4 850.5,77.8 856.5,51.7 862.5,51.4 868.5,63.0 874.5,75.9 880.5,76.5 886.5,69.5 892.5,60.0 898.5,63.0 904.5,57.4 910.5,61.8 916.5,54.8 922.5,48.5 928.5,57.4 934.5,49.0 940.5,63.8 946.5,53.6 952.5,56.0 958.5,56.0 964.5,44.0 970.5,35.0" fill="none" stroke="#008c00" stroke-width="3" stroke-linejoin="round" stroke-linecap="butt"/>
<rect x="10.0" y="134" width="1" height="19" fill="#0000ff" />
<rect x="16.0" y="134" width="1" height="21" fill="#0000ff" />
<rect x="22.0" y="134" width="1" height="21" fill="#0000ff" />
<rect x="28.0" y="135" width="1" height="21" fill="#0000ff" />
<rect x="34.0" y="139" width="1" height="21" fill="#0000ff" />
<rect x="40.0" y="141" width="1" height="21" fill="#0000ff" />
<rect x="46.0" y="144" width="1" height="20" fill="#0000ff" />
<rect x="52.0" y="148" width="1" height="20" fill="#0000ff" />
<rect x="58.0" y="152" width="1" height="22" fill="#0000ff" />
<rect x="64.0" y="154" width="1" height="27" fill="#0000ff" />
<rect x="70.0" y="165" width="1" height="24" fill="#0000ff" />
<rect x="76.0" y="177" width="1" height="21" fill="#0000ff" />
<rect x="82.0" y="190" width="1" height="26" fill="#0000ff" />
<rect x="88.0" y="191" width="1" height="28" fill="#0000ff" />
<rect x="94.0" y="191" width="1" height="30" fill="#0000ff" />
<rect x="100.0" y="191" width="1" height="32" fill="#0000ff" />
<rect x="106.0" y="191" width="1" height="34" fill="#0000ff" />
<rect x="112.0" y="194" width="1" height="33" fill="#0000ff" />
<rect x="118.0" y="194" width="1" height="35" fill="#0000ff" />
<rect x="124.0" y="194" width="1" height="36" fill="#0000ff" />
<rect x="130.0" y="194" width="1" height="33" fill="#0000ff" />
<rect x="136.0" y="197" width="1" height="27" fill="#0000ff" />
<rect x="142.0" y="200" width="1" height="21" fill="#0000ff" />
<rect x="148.0" y="202" width="1" height="16" fill="#0000ff" />
<rect x="154.0" y="202" width="1" height="16" fill="#0000ff" />
<rect x="160.0" y="202" width="1" height="16" fill="#0000ff" />
<rect x="166.0" y="202" width="1" height="13" fill="#0000ff" />
<rect x="172.0" y="202" width="1" height="11" fill="#0000ff" />
<rect x="178.0" y="202" width="1" height="11" fill="#0000ff" />
<rect x="184.0" y="202" width="1" height="12" fill="#0000ff" />
<rect x="190.0" y="202" width="1" height="9" fill="#0000ff" />
<rect x="196.0" y="202" width="1" height="7" fill="#0000ff" />
<rect x="202.0" y="202" width="1" height="3" fill="#0000ff" />
<rect x="208.0" y="202" width="1" height="3" fill="#0000ff" />
<rect x="214.0" y="201" width="1" height="3" fill="#ff0000" />
<rect x="220.0" y="188" width="1" height="18" fill="#ff0000" />
<rect x="226.0" y="187" width="1" height="19" fill="#ff0000" />
<rect x="232.0" y="186" width="1" height="20" fill="#ff0000" />
<rect x="238.0" y="177" width="1" height="31" fill="#ff0000" />
<rect x="244.0" y="176" width="1" height="32" fill="#ff0000" />
<rect x="250.0" y="174" width="1" height="34" fill="#ff0000" />
<rect x="256.0" y="171" width="1" height="37" fill="#ff0000" />
<rect x="262.0" y="168" width="1" height="40" fill="#ff0000" />
<rect x="268.0" y="166" width="1" height="42" fill="#ff0000" />
<rect x="274.0" y="162" width="1" height="46" fill="#ff0000" />
<rect x="280.0" y="162" width="1" height="46" fill="#ff0000" />
<rect x="286.0" y="163" width="1" height="45" fill="#ff0000" />
<rect x="292.0" y="164" width="1" height="44" fill="#ff0000" />
<rect x="298.0" y="164" width="1" height="44" fill="#ff0000" />
<rect x="304.0" y="163" width="1" height="45" fill="#ff0000" />
<rect x="310.0" y="163" width="1" height="45" fill="#ff0000" />
<rect x="316.0" y="163" width="1" height="45" fill="#ff0000" />
<rect x="322.0" y="161" width="1" height="47" fill="#ff0000" />
<rect x="328.0" y="160" width="1" height="48" fill="#ff0000" />
<rect x="334.0" y="160" width="1" height="48" fill="#ff0000" />
<rect x="340.0" y="157" width="1" height="51" fill="#ff0000" />
<rect x="346.0" y="157" width="1" height="51" fill="#ff0000" />
<rect x="352.0" y="158" width="1" height="50" fill="#ff0000" />
<rect x="358.0" y="158" width="1" height="50" fill="#ff0000" />
<rect x="364.0" y="158" width="1" height="50" fill="#ff0000" />
<rect x="370.0" y="159" width="1" height="49" fill="#ff0000" />
<rect x="376.0" y="159" width="1" height="49" fill="#ff0000" />
<rect x="382.0" y="160" width="1" height="48" fill="#ff0000" />
<rect x="388.0" y="160" width="1" height="48" fill="#ff0000" />
<rect x="394.0" y="162" width="1" height="35" fill="#ff0000" />
<rect x="400.0" y="162" width="1" height="31" fill="#ff0000" />
<rect x="406.0" y="161" width="1" height="27" fill="#ff0000" />
<rect x="412.0" y="160" width="1" height="28" fill="#ff0000" />
<rect x="418.0" y="160" width="1" height="28" fill="#ff0000" />
<rect x="424.0" y="161" width="1" height="25" fill="#ff0000" />
<rect x="430.0" y="162" width="1" height="15" fill="#ff0000" />
<rect x="436.0" y="166" width="1" height="10" fill="#ff0000" />
<rect x="442.0" y="176" width="1" height="3" fill="#0000ff" />
<rect x="448.0" y="176" width="1" height="3" fill="#0000ff" />
<rect x="454.0" y="176" width="1" height="3" fill="#0000ff" />
<rect x="460.0" y="171" width="1" height="9" fill="#0000ff" />
<rect x="466.0" y="171" width="1" height="10" fill="#0000ff" />
<rect x="472.0" y="171" width="1" height="12" fill="#0000ff" />
<rect x="478.0" y="171" width="1" height="13" fill="#0000ff" />
<rect x="484.0" y="171" width="1" height="14" fill="#0000ff" />
<rect x="490.0" y="171" width="1" height="14" fill="#0000ff" />
<rect x="496.0" y="175" width="1" height="16" fill="#0000ff" />
<rect x="502.0" y="175" width="1" height="16" fill="#0000ff" />
<rect x="508.0" y="175" width="1" height="10" fill="#0000ff" />
<rect x="550.0" y="172" width="1" height="1" fill="#ff0000" />
<rect x="556.0" y="166" width="1" height="7" fill="#ff0000" />
<rect x="562.0" y="161" width="1" height="12" fill="#ff0000" />
<rect x="568.0" y="161" width="1" height="12" fill="#ff0000" />
<rect x="574.0" y="154" width="1" height="14" fill="#ff0000" />
<rect x="580.0" y="154" width="1" height="14" fill="#ff0000" />
<rect x="586.0" y="150" width="1" height="14" fill="#ff0000" />
<rect x="592.0" y="141" width="1" height="13" fill="#ff0000" />
<rect x="598.0" y="128" width="1" height="13" fill="#ff0000" />
<rect x="604.0" y="128" width="1" height="13" fill="#ff0000" />
<rect x="610.0" y="127" width="1" height="14" fill="#ff0000" />
<rect x="616.0" y="123" width="1" height="18" fill="#ff0000" />
<rect x="622.0" y="121" width="1" height="20" fill="#ff0000" />
<rect x="628.0" y="134" width="1" height="7" fill="#ff0000" />
<rect x="634.0" y="134" width="1" height="7" fill="#ff0000" />
<rect x="640.0" y="134" width="1" height="7" fill="#ff0000" />
<rect x="646.0" y="134" width="1" height="7" fill="#ff0000" />
<rect x="652.0" y="133" width="1" height="8" fill="#ff0000" />
<rect x="658.0" y="135" width="1" height="6" fill="#ff0000" />
<rect x="664.0" y="139" width="1" height="2" fill="#ff0000" />
<rect x="670.0" y="139" width="1" height="2" fill="#ff0000" />
<rect x="676.0" y="141" width="1" height="1" fill="#0000ff" />
<rect x="682.0" y="141" width="1" height="12" fill="#0000ff" />
<rect x="688.0" y="141" width="1" height="14" fill="#0000ff" />
<rect x="694.0" y="141" width="1" height="14" fill="#0000ff" />
<rect x="700.0" y="141" width="1" height="14" fill="#0000ff" />
<rect x="706.0" y="141" width="1" height="14" fill="#0000ff" />
<rect x="712.0" y="141" width="1" height="14" fill="#0000ff" />
<rect x="718.0" y="141" width="1" height="13" fill="#0000ff" />
<rect x="724.0" y="141" width="1" height="13" fill="#0000ff" />
<rect x="730.0" y="141" width="1" height="13" fill="#0000ff" />
<rect x="736.0" y="141" width="1" height="13" fill="#0000ff" />
<rect x="742.0" y="141" width="1" height="13" fill="#0000ff" />
<rect x="748.0" y="141" width="1" height="13" fill="#0000ff" />
<rect x="754.0" y="141" width="1" height="13" fill="#0000ff" />
<rect x="760.0" y="141" width="1" height="20" fill="#0000ff" />
<rect x="766.0" y="141" width="1" height="25" fill="#0000ff" />
<rect x="772.0" y="141" width="1" height="25" fill="#0000ff" />
<rect x="778.0" y="141" width="1" height="28" fill="#0000ff" />
<rect x="784.0" y="141" width="1" height="42" fill="#0000ff" />
<rect x="790.0" y="141" width="1" height="45" fill="#0000ff" />
<rect x="796.0" y="141" width="1" height="45" fill="#0000ff" />
<rect x="802.0" y="141" width="1" height="45" fill="#0000ff" />
<rect x="808.0" y="139" width="1" height="47" fill="#0000ff" />
<rect x="814.0" y="131" width="1" height="55" fill="#0000ff" />
<rect x="820.0" y="131" width="1" height="56" fill="#0000ff" />
<rect x="826.0" y="132" width="1" height="56" fill="#0000ff" />
<rect x="832.0" y="133" width="1" height="57" fill="#0000ff" />
<rect x="838.0" y="136" width="1" height="56" fill="#0000ff" />
<rect x="844.0" y="137" width="1" height="56" fill="#0000ff" />
<rect x="850.0" y="139" width="1" height="56" fill="#0000ff" />
<rect x="856.0" y="139" width="1" height="56" fill="#0000ff" />
<rect x="862.0" y="139" width="1" height="56" fill="#0000ff" />
<rect x="868.0" y="139" width="1" height="57" fill="#0000ff" />
<rect x="874.0" y="139" width="1" height="58" fill="#0000ff" />
<rect x="880.0" y="139" width="1" height="59" fill="#0000ff" />
<rect x="886.0" y="139" width="1" height="59" fill="#0000ff" />
<rect x="892.0" y="139" width="1" height="59" fill="#0000ff" />
<rect x="898.0" y="139" width="1" height="59" fill="#0000ff" />
<rect x="904.0" y="139" width="1" height="60" fill="#0000ff" />
<rect x="910.0" y="139" width="1" height="61" fill="#0000ff" />
<rect x="916.0" y="154" width="1" height="46" fill="#0000ff" />
<rect x="922.0" y="162" width="1" height="39" fill="#0000ff" />
<rect x="928.0" y="162" width="1" height="38" fill="#0000ff" />
<rect x="934.0" y="167" width="1" height="33" fill="#0000ff" />
<rect x="940.0" y="190" width="1" height="8" fill="#0000ff" />
<rect x="946.0" y="193" width="1" height="5" fill="#0000ff" />
<rect x="952.0" y="193" width="1" height="2" fill="#0000ff" />
<rect x="976.0" y="192" width="1" height="1" fill="#ff0000" />
<rect x="982.0" y="190" width="1" height="3" fill="#ff0000" />
<rect x="988.0" y="190" width="1" height="3" fill="#ff0000" />
<rect x="994.0" y="187" width="1" height="6" fill="#ff0000" />
<rect x="1000.0" y="187" width="1" height="6" fill="#ff0000" />
<rect x="1060.0" y="170" width="1" height="8" fill="#ff0000" />
<rect x="1066.0" y="163" width="1" height="15" fill="#ff0000" />
<rect x="1072.0" y="160" width="1" height="14" fill="#ff0000" />
<rect x="1078.0" y="157" width="1" height="14" fill="#ff0000" />
<rect x="1084.0" y="157" width="1" height="14" fill="#ff0000" />
<rect x="1090.0" y="157" width="1" height="14" fill="#ff0000" />
<rect x="1096.0" y="157" width="1" height="14" fill="#ff0000" />
<rect x="1102.0" y="151" width="1" height="20" fill="#ff0000" />
<rect x="1108.0" y="147" width="1" height="21" fill="#ff0000" />
<rect x="1114.0" y="146" width="1" height="21" fill="#ff0000" />
<rect x="1120.0" y="143" width="1" height="21" fill="#ff0000" />
<polyline points="4.9,148.8 11.0,153.0 16.7,155.0 27.8,155.8 34.7,160.6 45.8,163.4 52.8,168.3 58.3,173.8 65.3,182.2 70.8,189.1 77.8,200.2 82.8,216.6 124.2,230.6 133.0,225.0 148.6,218.4 161.0,217.6 171.7,213.0 178.0,213.0 184.0,213.7 196.4,209.1 202.6,205.2 208.8,204.5 215.0,200.6 219.6,188.3 224.2,186.7 232.0,186.4 238.0,177.5 249.0,174.4 270.0,165.1 276.0,161.5 283.0,162.0 291.0,164.0 298.5,164.4 304.5,162.9 310.5,162.9 316.5,162.9 322.5,161.1 328.5,159.9 334.5,160.3 340.5,157.2 346.5,157.2 352.5,158.0 358.5,157.9 364.5,158.0 370.5,158.8 376.5,159.1 382.5,160.3 388.5,160.3 394.5,162.2 400.5,162.4 406.5,160.5 412.5,160.5 418.5,160.5 424.5,160.8 430.5,162.5 436.5,165.6 442.5,179.0 448.5,179.0 454.5,179.0 460.5,179.6 466.5,181.4 472.5,183.0 478.5,183.8 484.5,185.2 490.5,185.2 496.5,191.2 502.5,191.4 508.5,185.0 514.5,173.0 520.5,173.0 526.5,173.0 532.5,173.0 538.5,173.0 544.5,173.0 550.5,171.8 556.5,166.2 562.5,160.8 568.5,161.2 574.5,154.0 580.5,154.0 586.5,150.0 592.5,141.0 598.5,127.8 604.5,127.8 610.5,126.7 616.5,122.9 622.5,121.1 628.5,133.9 634.5,133.9 640.5,133.9 646.5,134.3 652.5,133.1 658.5,134.9 664.5,139.0 670.5,139.4 676.5,141.9 682.5,153.0 688.5,154.6 694.5,154.6 700.5,154.8 706.5,154.8 712.5,154.8 718.5,154.1 724.5,153.8 730.5,153.8 736.5,153.9 742.5,153.9 748.5,153.9 754.5,153.9 760.5,161.2 766.5,165.8 772.5,166.2 778.5,168.7 784.5,182.6 790.5,185.7 796.5,185.7 802.5,185.8 808.5,186.4 814.5,186.4 820.5,187.1 826.5,187.8 832.5,189.6 838.5,192.5 844.5,193.4 850.5,195.0 856.5,195.0 862.5,195.0 868.5,196.1 874.5,197.3 880.5,198.4 886.5,198.4 892.5,198.4 898.5,198.4 904.5,198.9 910.5,199.5 916.5,199.5 922.5,200.9 928.5,200.5 934.5,199.9 940.5,197.7 946.5,197.7 952.5,195.4 958.5,193.2 964.5,192.8 970.5,192.8 976.5,191.6 982.5,190.0 988.5,189.6 994.5,187.2 1000.5,186.6 1006.5,181.6 1012.5,181.6 1018.5,181.6 1024.5,181.6 1030.5,181.6 1036.5,177.5 1042.5,177.5 1048.5,177.5 1054.5,177.5 1060.5,169.8 1066.5,162.8 1072.5,159.7 1078.5,156.7 1084.5,156.7 1090.5,156.7 1096.5,156.7 1102.5,150.7 1108.5,146.9 1114.5,146.2 1120.5,142.9" fill="none" stroke="#00ffff" stroke-width="1" stroke-linejoin="round" stroke-linecap="butt"/>
<polyline points="4.2,134.3 27.8,134.3 34.7,139.1 41.7,141.9 48.6,144.7 55.6,150.9 61.1,153.0 65.3,154.4 72.2,168.3 77.8,179.4 82.8,191.2 107.7,191.2 112.3,194.3 133.0,194.4 139.3,199.0 145.5,201.7 210.3,201.7 215.0,204.5 221.0,206.0 233.5,206.0 238.0,208.3 388.9,208.3 394.3,196.8 400.0,193.0 406.0,188.3 418.5,187.5 424.7,186.0 430.0,176.7 437.0,176.2 454.0,176.2 460.2,170.5 460.5,171.0 466.5,171.0 472.5,171.0 478.5,170.9 484.5,170.9 490.5,170.9 496.5,175.0 502.5,175.0 508.5,175.0 514.5,173.0 520.5,173.0 526.5,173.0 532.5,173.0 538.5,173.0 544.5,173.0 550.5,173.0 556.5,173.0 562.5,173.0 568.5,173.0 574.5,167.5 580.5,167.5 586.5,163.5 592.5,154.5 598.5,141.2 604.5,141.2 610.5,141.2 616.5,141.2 622.5,141.2 628.5,141.2 634.5,141.2 640.5,141.2 646.5,141.2 652.5,141.2 658.5,141.2 664.5,141.2 670.5,141.2 676.5,141.2 682.5,141.2 688.5,141.2 694.5,141.2 700.5,141.2 706.5,141.2 712.5,141.2 718.5,141.2 724.5,141.2 730.5,141.2 736.5,141.2 742.5,141.2 748.5,141.2 754.5,141.2 760.5,141.2 766.5,141.2 772.5,141.2 778.5,141.2 784.5,141.2 790.5,141.2 796.5,141.2 802.5,141.2 808.5,138.8 814.5,131.1 820.5,131.1 826.5,131.5 832.5,133.2 838.5,136.2 844.5,137.1 850.5,138.7 856.5,138.7 862.5,138.7 868.5,138.7 874.5,138.7 880.5,138.7 886.5,138.7 892.5,138.7 898.5,138.7 904.5,139.2 910.5,139.2 916.5,153.9 922.5,161.7 928.5,162.4 934.5,167.4 940.5,189.7 946.5,192.9 952.5,192.9 958.5,193.2 964.5,193.2 970.5,193.2 976.5,193.2 982.5,193.2 988.5,193.2 994.5,193.2 1000.5,192.9 1006.5,181.6 1012.5,181.6 1018.5,181.6 1024.5,181.6 1030.5,181.6 1036.5,177.5 1042.5,177.5 1048.5,177.5 1054.5,177.5 1060.5,177.5 1066.5,177.5 1072.5,174.3 1078.5,171.3 1084.5,171.3 1090.5,171.3 1096.5,171.3 1102.5,171.3 1108.5,167.8 1114.5,167.1 1120.5,163.8" fill="none" stroke="#ff0000" stroke-width="1" stroke-linejoin="round" stroke-linecap="butt"/>
<polyline points="4.2,133.3 27.8,135.0 55.6,136.6 83.3,137.7 110.0,140.4 141.0,143.5 187.0,145.0 233.5,146.6 270.0,148.5 290.9,150.5 321.7,152.8 352.6,155.1 383.5,156.6 420.0,157.4 461.7,157.7 508.0,159.7 550.0,163.2 581.8,165.6 629.6,168.8 677.4,172.0 709.2,173.6 740.0,175.6 763.9,176.8 787.8,177.2 811.7,176.8 835.5,175.2 859.4,173.6 883.3,171.2 900.0,170.0 904.5,170.5 910.5,170.1 916.5,169.5 922.5,169.0 928.5,168.5 934.5,168.1 940.5,167.9 946.5,167.7 952.5,167.2 958.5,166.8 964.5,166.4 970.5,166.2 976.5,165.9 982.5,165.6 988.5,165.2 994.5,164.8 1000.5,164.3 1006.5,163.6 1012.5,162.9 1018.5,162.3 1024.5,161.7 1030.5,161.1 1036.5,160.5 1042.5,159.9 1048.5,159.3 1054.5,158.8 1060.5,158.2 1066.5,157.5 1072.5,156.8 1078.5,156.1 1084.5,155.4 1090.5,154.8 1096.5,154.0 1102.5,153.2 1108.5,152.5 1114.5,151.7 1120.5,150.9" fill="none" stroke="#ffff00" stroke-width="1" stroke-linejoin="round" stroke-linecap="butt"/>
</g>
<g shape-rendering="crispEdges">
<rect x="4.0" y="193" width="1" height="13" fill="#ff0000" />
<rect x="3.0" y="195" width="3" height="9" fill="#ff0000" />
<rect x="10.0" y="193" width="1" height="9" fill="#0000ff" />
<rect x="9.0" y="197" width="3" height="4" fill="#0000ff" />
<rect x="16.0" y="200" width="1" height="11" fill="#0000ff" />
<rect x="15.0" y="200" width="3" height="3" fill="#0000ff" />
<rect x="22.0" y="191" width="1" height="13" fill="#ff0000" />
<rect x="21.0" y="195" width="3" height="5" fill="#ff0000" />
<rect x="28.0" y="191" width="1" height="8" fill="#ff0000" />
<rect x="27.0" y="194" width="3" height="4" fill="#ff0000" />
<rect x="34.0" y="196" width="1" height="2" fill="#0000ff" />
<rect x="33.0" y="197" width="3" height="1" fill="#0000ff" />
<rect x="40.0" y="168" width="1" height="16" fill="#ff0000" />
<rect x="39.0" y="172" width="3" height="6" fill="#ff0000" />
<rect x="46.0" y="162" width="1" height="12" fill="#ff0000" />
<rect x="45.0" y="165" width="3" height="9" fill="#ff0000" />
<rect x="52.0" y="163" width="1" height="23" fill="#0000ff" />
<rect x="51.0" y="166" width="3" height="17" fill="#0000ff" />
<rect x="58.0" y="167" width="1" height="16" fill="#ff0000" />
<rect x="57.0" y="170" width="3" height="12" fill="#ff0000" />
<rect x="64.0" y="153" width="1" height="20" fill="#ff0000" />
<rect x="63.0" y="154" width="3" height="18" fill="#ff0000" />
<rect x="70.0" y="131" width="1" height="25" fill="#ff0000" />
<rect x="69.0" y="134" width="3" height="21" fill="#ff0000" />
<rect x="76.0" y="132" width="1" height="23" fill="#0000ff" />
<rect x="75.0" y="136" width="3" height="16" fill="#0000ff" />
<rect x="82.0" y="147" width="1" height="16" fill="#ff0000" />
<rect x="81.0" y="149" width="3" height="3" fill="#ff0000" />
<rect x="88.0" y="141" width="1" height="25" fill="#0000ff" />
<rect x="87.0" y="148" width="3" height="8" fill="#0000ff" />
<rect x="94.0" y="141" width="1" height="22" fill="#ff0000" />
<rect x="93.0" y="145" width="3" height="13" fill="#ff0000" />
<rect x="100.0" y="143" width="1" height="13" fill="#0000ff" />
<rect x="99.0" y="145" width="3" height="8" fill="#0000ff" />
<rect x="106.0" y="144" width="1" height="12" fill="#0000ff" />
<rect x="105.0" y="152" width="3" height="4" fill="#0000ff" />
<rect x="112.0" y="150" width="1" height="17" fill="#0000ff" />
<rect x="111.0" y="155" width="3" height="5" fill="#0000ff" />
<rect x="118.0" y="152" width="1" height="11" fill="#ff0000" />
<rect x="117.0" y="156" width="3" height="3" fill="#ff0000" />
<rect x="124.0" y="155" width="1" height="12" fill="#0000ff" />
<rect x="123.0" y="156" width="3" height="8" fill="#0000ff" />
<rect x="130.0" y="158" width="1" height="15" fill="#ff0000" />
<rect x="129.0" y="158" width="3" height="8" fill="#ff0000" />
<rect x="136.0" y="149" width="1" height="15" fill="#0000ff" />
<rect x="135.0" y="156" width="3" height="3" fill="#0000ff" />
<rect x="142.0" y="145" width="1" height="12" fill="#ff0000" />
<rect x="141.0" y="153" width="3" height="4" fill="#ff0000" />
<rect x="148.0" y="144" width="1" height="12" fill="#ff0000" />
<rect x="147.0" y="147" width="3" height="9" fill="#ff0000" />
<rect x="154.0" y="137" width="1" height="12" fill="#ff0000" />
<rect x="153.0" y="144" width="3" height="4" fill="#ff0000" />
<rect x="160.0" y="139" width="1" height="13" fill="#0000ff" />
<rect x="159.0" y="144" width="3" height="6" fill="#0000ff" />
<rect x="166.0" y="144" width="1" height="13" fill="#0000ff" />
<rect x="165.0" y="149" width="3" height="7" fill="#0000ff" />
<rect x="172.0" y="152" width="1" height="3" fill="#ff0000" />
<rect x="171.0" y="152" width="3" height="2" fill="#ff0000" />
<rect x="178.0" y="151" width="1" height="8" fill="#0000ff" />
<rect x="177.0" y="152" width="3" height="6" fill="#0000ff" />
<rect x="184.0" y="158" width="1" height="17" fill="#0000ff" />
<rect x="183.0" y="158" width="3" height="4" fill="#0000ff" />
<rect x="190.0" y="147" width="1" height="16" fill="#ff0000" />
<rect x="189.0" y="157" width="3" height="6" fill="#ff0000" />
<rect x="196.0" y="155" width="1" height="13" fill="#0000ff" />
<rect x="195.0" y="156" width="3" height="11" fill="#0000ff" />
<rect x="202.0" y="164" width="1" height="14" fill="#0000ff" />
<rect x="201.0" y="166" width="3" height="5" fill="#0000ff" />
<rect x="208.0" y="162" width="1" height="9" fill="#ff0000" />
<rect x="207.0" y="163" width="3" height="7" fill="#ff0000" />
<rect x="214.0" y="162" width="1" height="6" fill="#ff0000" />
<rect x="213.0" y="162" width="3" height="4" fill="#ff0000" />
<rect x="220.0" y="157" width="1" height="10" fill="#ff0000" />
<rect x="219.0" y="158" width="3" height="5" fill="#ff0000" />
<rect x="226.0" y="156" width="1" height="8" fill="#0000ff" />
<rect x="225.0" y="158" width="3" height="5" fill="#0000ff" />
<rect x="232.0" y="162" width="1" height="9" fill="#0000ff" />
<rect x="231.0" y="163" width="3" height="1" fill="#0000ff" />
<rect x="238.0" y="161" width="1" height="6" fill="#0000ff" />
<rect x="237.0" y="161" width="3" height="2" fill="#0000ff" />
<rect x="244.0" y="161" width="1" height="5" fill="#ff0000" />
<rect x="243.0" y="162" width="3" height="2" fill="#ff0000" />
<rect x="250.0" y="158" width="1" height="6" fill="#ff0000" />
<rect x="249.0" y="159" width="3" height="2" fill="#ff0000" />
<rect x="256.0" y="158" width="1" height="6" fill="#0000ff" />
<rect x="255.0" y="159" width="3" height="2" fill="#0000ff" />
<rect x="262.0" y="158" width="1" height="5" fill="#ff0000" />
<rect x="261.0" y="159" width="3" height="2" fill="#ff0000" />
<rect x="268.0" y="160" width="1" height="9" fill="#0000ff" />
<rect x="267.0" y="160" width="3" height="5" fill="#0000ff" />
<rect x="274.0" y="163" width="1" height="9" fill="#0000ff" />
<rect x="273.0" y="164" width="3" height="5" fill="#0000ff" />
<rect x="280.0" y="166" width="1" height="11" fill="#0000ff" />
<rect x="279.0" y="168" width="3" height="6" fill="#0000ff" />
<rect x="286.0" y="172" width="1" height="12" fill="#0000ff" />
<rect x="285.0" y="174" width="3" height="8" fill="#0000ff" />
<rect x="292.0" y="178" width="1" height="33" fill="#0000ff" />
<rect x="291.0" y="182" width="3" height="24" fill="#0000ff" />
<rect x="298.0" y="188" width="1" height="22" fill="#ff0000" />
<rect x="297.0" y="190" width="3" height="16" fill="#ff0000" />
<rect x="304.0" y="184" width="1" height="8" fill="#ff0000" />
<rect x="303.0" y="185" width="3" height="6" fill="#ff0000" />
<rect x="310.0" y="183" width="1" height="18" fill="#0000ff" />
<rect x="309.0" y="185" width="3" height="3" fill="#0000ff" />
<rect x="316.0" y="182" width="1" height="14" fill="#0000ff" />
<rect x="315.0" y="185" width="3" height="6" fill="#0000ff" />
<rect x="322.0" y="178" width="1" height="14" fill="#ff0000" />
<rect x="321.0" y="179" width="3" height="11" fill="#ff0000" />
<rect x="328.0" y="172" width="1" height="18" fill="#0000ff" />
<rect x="327.0" y="180" width="3" height="3" fill="#0000ff" />
<rect x="334.0" y="176" width="1" height="12" fill="#0000ff" />
<rect x="333.0" y="181" width="3" height="7" fill="#0000ff" />
<rect x="340.0" y="180" width="1" height="15" fill="#0000ff" />
<rect x="339.0" y="185" width="3" height="7" fill="#0000ff" />
<rect x="346.0" y="188" width="1" height="31" fill="#0000ff" />
<rect x="345.0" y="191" width="3" height="22" fill="#0000ff" />
<rect x="352.0" y="184" width="1" height="30" fill="#ff0000" />
<rect x="351.0" y="185" width="3" height="28" fill="#ff0000" />
<rect x="358.0" y="151" width="1" height="41" fill="#ff0000" />
<rect x="357.0" y="152" width="3" height="39" fill="#ff0000" />
<rect x="364.0" y="127" width="1" height="28" fill="#ff0000" />
<rect x="363.0" y="142" width="3" height="13" fill="#ff0000" />
<rect x="370.0" y="133" width="1" height="37" fill="#0000ff" />
<rect x="369.0" y="141" width="3" height="24" fill="#0000ff" />
<rect x="376.0" y="151" width="1" height="14" fill="#ff0000" />
<rect x="375.0" y="154" width="3" height="11" fill="#ff0000" />
<rect x="382.0" y="137" width="1" height="16" fill="#ff0000" />
<rect x="381.0" y="140" width="3" height="12" fill="#ff0000" />
<rect x="388.0" y="129" width="1" height="23" fill="#0000ff" />
<rect x="387.0" y="139" width="3" height="10" fill="#0000ff" />
<rect x="394.0" y="147" width="1" height="16" fill="#0000ff" />
<rect x="393.0" y="148" width="3" height="7" fill="#0000ff" />
<rect x="400.0" y="144" width="1" height="11" fill="#ff0000" />
<rect x="399.0" y="151" width="3" height="4" fill="#ff0000" />
<rect x="406.0" y="149" width="1" height="16" fill="#0000ff" />
<rect x="405.0" y="151" width="3" height="10" fill="#0000ff" />
<rect x="412.0" y="137" width="1" height="24" fill="#ff0000" />
<rect x="411.0" y="143" width="3" height="17" fill="#ff0000" />
<rect x="418.0" y="129" width="1" height="17" fill="#ff0000" />
<rect x="417.0" y="135" width="3" height="10" fill="#ff0000" />
<rect x="424.0" y="116" width="1" height="20" fill="#ff0000" />
<rect x="423.0" y="128" width="3" height="7" fill="#ff0000" />
<rect x="430.0" y="121" width="1" height="17" fill="#ff0000" />
<rect x="429.0" y="122" width="3" height="8" fill="#ff0000" />
<rect x="436.0" y="108" width="1" height="16" fill="#ff0000" />
<rect x="435.0" y="109" width="3" height="13" fill="#ff0000" />
<rect x="442.0" y="90" width="1" height="21" fill="#ff0000" />
<rect x="441.0" y="98" width="3" height="12" fill="#ff0000" />
<rect x="448.0" y="64" width="1" height="36" fill="#ff0000" />
<rect x="447.0" y="64" width="3" height="35" fill="#ff0000" />
<rect x="454.0" y="64" width="1" height="43" fill="#0000ff" />
<rect x="453.0" y="64" width="3" height="28" fill="#0000ff" />
<rect x="460.0" y="93" width="1" height="33" fill="#0000ff" />
<rect x="459.0" y="93" width="3" height="22" fill="#0000ff" />
<rect x="466.0" y="108" width="1" height="22" fill="#0000ff" />
<rect x="465.0" y="113" width="3" height="13" fill="#0000ff" />
<rect x="472.0" y="110" width="1" height="28" fill="#ff0000" />
<rect x="471.0" y="120" width="3" height="7" fill="#ff0000" />
<rect x="478.0" y="120" width="1" height="70" fill="#0000ff" />
<rect x="477.0" y="121" width="3" height="44" fill="#0000ff" />
<rect x="484.0" y="164" width="1" height="4" fill="#0000ff" />
<rect x="483.0" y="164" width="3" height="4" fill="#0000ff" />
<rect x="490.0" y="172" width="1" height="8" fill="#0000ff" />
<rect x="489.0" y="174" width="3" height="1" fill="#0000ff" />
<rect x="496.0" y="171" width="1" height="20" fill="#0000ff" />
<rect x="495.0" y="174" width="3" height="5" fill="#0000ff" />
<rect x="502.0" y="177" width="1" height="14" fill="#0000ff" />
<rect x="501.0" y="179" width="3" height="1" fill="#0000ff" />
<rect x="508.0" y="177" width="1" height="14" fill="#0000ff" />
<rect x="507.0" y="181" width="3" height="8" fill="#0000ff" />
<rect x="514.0" y="183" width="1" height="9" fill="#ff0000" />
<rect x="513.0" y="185" width="3" height="5" fill="#ff0000" />
<rect x="520.0" y="178" width="1" height="11" fill="#ff0000" />
<rect x="519.0" y="179" width="3" height="7" fill="#ff0000" />
<rect x="526.0" y="175" width="1" height="11" fill="#0000ff" />
<rect x="525.0" y="179" width="3" height="5" fill="#0000ff" />
<rect x="532.0" y="180" width="1" height="6" fill="#ff0000" />
<rect x="531.0" y="180" width="3" height="6" fill="#ff0000" />
<rect x="538.0" y="179" width="1" height="8" fill="#ff0000" />
<rect x="537.0" y="180" width="3" height="2" fill="#ff0000" />
<rect x="544.0" y="176" width="1" height="6" fill="#ff0000" />
<rect x="543.0" y="177" width="3" height="4" fill="#ff0000" />
<rect x="550.0" y="172" width="1" height="7" fill="#ff0000" />
<rect x="549.0" y="175" width="3" height="4" fill="#ff0000" />
<rect x="556.0" y="172" width="1" height="8" fill="#0000ff" />
<rect x="555.0" y="174" width="3" height="4" fill="#0000ff" />
<rect x="562.0" y="172" width="1" height="7" fill="#ff0000" />
<rect x="561.0" y="174" width="3" height="4" fill="#ff0000" />
<rect x="568.0" y="174" width="1" height="6" fill="#0000ff" />
<rect x="567.0" y="175" width="3" height="4" fill="#0000ff" />
<rect x="574.0" y="178" width="1" height="10" fill="#0000ff" />
<rect x="573.0" y="178" width="3" height="8" fill="#0000ff" />
<rect x="580.0" y="180" width="1" height="7" fill="#ff0000" />
<rect x="579.0" y="181" width="3" height="5" fill="#ff0000" />
<rect x="586.0" y="181" width="1" height="7" fill="#0000ff" />
<rect x="585.0" y="181" width="3" height="7" fill="#0000ff" />
<rect x="592.0" y="180" width="1" height="8" fill="#ff0000" />
<rect x="591.0" y="181" width="3" height="7" fill="#ff0000" />
<rect x="598.0" y="175" width="1" height="7" fill="#ff0000" />
<rect x="597.0" y="180" width="3" height="2" fill="#ff0000" />
<rect x="604.0" y="174" width="1" height="8" fill="#0000ff" />
<rect x="603.0" y="178" width="3" height="2" fill="#0000ff" />
<rect x="610.0" y="177" width="1" height="5" fill="#0000ff" />
<rect x="609.0" y="178" width="3" height="3" fill="#0000ff" />
<rect x="616.0" y="177" width="1" height="7" fill="#0000ff" />
<rect x="615.0" y="178" width="3" height="5" fill="#0000ff" />
<rect x="622.0" y="180" width="1" height="4" fill="#0000ff" />
<rect x="621.0" y="181" width="3" height="1" fill="#0000ff" />
<rect x="628.0" y="181" width="1" height="5" fill="#0000ff" />
<rect x="627.0" y="183" width="3" height="1" fill="#0000ff" />
<rect x="634.0" y="182" width="1" height="14" fill="#0000ff" />
<rect x="633.0" y="182" width="3" height="12" fill="#0000ff" />
<rect x="640.0" y="187" width="1" height="12" fill="#0000ff" />
<rect x="639.0" y="191" width="3" height="3" fill="#0000ff" />
<rect x="646.0" y="185" width="1" height="10" fill="#ff0000" />
<rect x="645.0" y="186" width="3" height="7" fill="#ff0000" />
<rect x="652.0" y="182" width="1" height="8" fill="#ff0000" />
<rect x="651.0" y="183" width="3" height="6" fill="#ff0000" />
<rect x="658.0" y="183" width="1" height="8" fill="#0000ff" />
<rect x="657.0" y="185" width="3" height="1" fill="#0000ff" />
<rect x="664.0" y="181" width="1" height="6" fill="#0000ff" />
<rect x="663.0" y="183" width="3" height="3" fill="#0000ff" />
<rect x="670.0" y="183" width="1" height="9" fill="#0000ff" />
<rect x="669.0" y="184" width="3" height="6" fill="#0000ff" />
<rect x="676.0" y="187" width="1" height="13" fill="#0000ff" />
<rect x="675.0" y="188" width="3" height="11" fill="#0000ff" />
<rect x="682.0" y="193" width="1" height="10" fill="#0000ff" />
<rect x="681.0" y="198" width="3" height="4" fill="#0000ff" />
<rect x="688.0" y="195" width="1" height="14" fill="#0000ff" />
<rect x="687.0" y="201" width="3" height="2" fill="#0000ff" />
<rect x="694.0" y="200" width="1" height="11" fill="#0000ff" />
<rect x="693.0" y="202" width="3" height="5" fill="#0000ff" />
<rect x="700.0" y="203" width="1" height="11" fill="#ff0000" />
<rect x="699.0" y="204" width="3" height="5" fill="#ff0000" />
<rect x="706.0" y="198" width="1" height="10" fill="#ff0000" />
<rect x="705.0" y="202" width="3" height="2" fill="#ff0000" />
<rect x="712.0" y="196" width="1" height="9" fill="#ff0000" />
<rect x="711.0" y="197" width="3" height="5" fill="#ff0000" />
<rect x="718.0" y="191" width="1" height="9" fill="#ff0000" />
<rect x="717.0" y="194" width="3" height="5" fill="#ff0000" />
<rect x="724.0" y="194" width="1" height="14" fill="#0000ff" />
<rect x="723.0" y="195" width="3" height="3" fill="#0000ff" />
<rect x="730.0" y="198" width="1" height="7" fill="#0000ff" />
<rect x="729.0" y="198" width="3" height="5" fill="#0000ff" />
<rect x="736.0" y="198" width="1" height="6" fill="#ff0000" />
<rect x="735.0" y="199" width="3" height="4" fill="#ff0000" />
<rect x="742.0" y="196" width="1" height="8" fill="#0000ff" />
<rect x="741.0" y="197" width="3" height="4" fill="#0000ff" />
<rect x="748.0" y="194" width="1" height="19" fill="#0000ff" />
<rect x="747.0" y="201" width="3" height="7" fill="#0000ff" />
<rect x="754.0" y="205" width="1" height="10" fill="#ff0000" />
<rect x="753.0" y="206" width="3" height="1" fill="#ff0000" />
<rect x="760.0" y="202" width="1" height="6" fill="#ff0000" />
<rect x="759.0" y="205" width="3" height="2" fill="#ff0000" />
<rect x="766.0" y="198" width="1" height="9" fill="#0000ff" />
<rect x="765.0" y="201" width="3" height="4" fill="#0000ff" />
<rect x="772.0" y="200" width="1" height="7" fill="#ff0000" />
<rect x="771.0" y="202" width="3" height="4" fill="#ff0000" />
<rect x="778.0" y="191" width="1" height="11" fill="#ff0000" />
<rect x="777.0" y="194" width="3" height="8" fill="#ff0000" />
<rect x="784.0" y="189" width="1" height="7" fill="#ff0000" />
<rect x="783.0" y="191" width="3" height="4" fill="#ff0000" />
<rect x="790.0" y="180" width="1" height="14" fill="#ff0000" />
<rect x="789.0" y="182" width="3" height="10" fill="#ff0000" />
<rect x="796.0" y="180" width="1" height="11" fill="#0000ff" />
<rect x="795.0" y="182" width="3" height="2" fill="#0000ff" />
<rect x="802.0" y="176" width="1" height="11" fill="#ff0000" />
<rect x="801.0" y="182" width="3" height="2" fill="#ff0000" />
<rect x="808.0" y="175" width="1" height="12" fill="#ff0000" />
<rect x="807.0" y="179" width="3" height="4" fill="#ff0000" />
<rect x="814.0" y="177" width="1" height="10" fill="#0000ff" />
<rect x="813.0" y="178" width="3" height="4" fill="#0000ff" />
<rect x="820.0" y="177" width="1" height="11" fill="#0000ff" />
<rect x="819.0" y="179" width="3" height="7" fill="#0000ff" />
<rect x="826.0" y="180" width="1" height="7" fill="#ff0000" />
<rect x="825.0" y="182" width="3" height="1" fill="#ff0000" />
<rect x="832.0" y="175" width="1" height="14" fill="#ff0000" />
<rect x="831.0" y="179" width="3" height="6" fill="#ff0000" />
<rect x="838.0" y="175" width="1" height="11" fill="#ff0000" />
<rect x="837.0" y="178" width="3" height="2" fill="#ff0000" />
<rect x="844.0" y="172" width="1" height="10" fill="#ff0000" />
<rect x="843.0" y="174" width="3" height="5" fill="#ff0000" />
<rect x="850.0" y="171" width="1" height="9" fill="#ff0000" />
<rect x="849.0" y="172" width="3" height="1" fill="#ff0000" />
<rect x="856.0" y="131" width="1" height="102" fill="#0000ff" />
<rect x="855.0" y="172" width="3" height="26" fill="#0000ff" />
<rect x="862.0" y="160" width="1" height="42" fill="#ff0000" />
<rect x="861.0" y="164" width="3" height="35" fill="#ff0000" />
<rect x="868.0" y="131" width="1" height="37" fill="#ff0000" />
<rect x="867.0" y="148" width="3" height="16" fill="#ff0000" />
<rect x="874.0" y="145" width="1" height="13" fill="#0000ff" />
<rect x="873.0" y="149" width="3" height="4" fill="#0000ff" />
<rect x="880.0" y="135" width="1" height="21" fill="#ff0000" />
<rect x="879.0" y="138" width="3" height="15" fill="#ff0000" />
<rect x="886.0" y="122" width="1" height="19" fill="#ff0000" />
<rect x="885.0" y="132" width="3" height="8" fill="#ff0000" />
<rect x="892.0" y="128" width="1" height="32" fill="#0000ff" />
<rect x="891.0" y="132" width="3" height="27" fill="#0000ff" />
<rect x="898.0" y="140" width="1" height="34" fill="#ff0000" />
<rect x="897.0" y="146" width="3" height="11" fill="#ff0000" />
<rect x="904.0" y="133" width="1" height="17" fill="#ff0000" />
<rect x="903.0" y="135" width="3" height="11" fill="#ff0000" />
<rect x="910.0" y="128" width="1" height="10" fill="#ff0000" />
<rect x="909.0" y="132" width="3" height="5" fill="#ff0000" />
<rect x="916.0" y="124" width="1" height="12" fill="#ff0000" />
<rect x="915.0" y="125" width="3" height="8" fill="#ff0000" />
<rect x="922.0" y="116" width="1" height="11" fill="#ff0000" />
<rect x="921.0" y="117" width="3" height="9" fill="#ff0000" />
<rect x="928.0" y="110" width="1" height="17" fill="#0000ff" />
<rect x="927.0" y="118" width="3" height="3" fill="#0000ff" />
<rect x="934.0" y="120" width="1" height="18" fill="#0000ff" />
<rect x="933.0" y="120" width="3" height="9" fill="#0000ff" />
<rect x="940.0" y="125" width="1" height="24" fill="#0000ff" />
<rect x="939.0" y="128" width="3" height="15" fill="#0000ff" />
<rect x="946.0" y="126" width="1" height="20" fill="#ff0000" />
<rect x="945.0" y="133" width="3" height="12" fill="#ff0000" />
<rect x="952.0" y="111" width="1" height="19" fill="#ff0000" />
<rect x="951.0" y="112" width="3" height="17" fill="#ff0000" />
<rect x="958.0" y="103" width="1" height="14" fill="#ff0000" />
<rect x="957.0" y="105" width="3" height="8" fill="#ff0000" />
<rect x="964.0" y="102" width="1" height="8" fill="#ff0000" />
<rect x="963.0" y="102" width="3" height="8" fill="#ff0000" />
<rect x="970.0" y="95" width="1" height="14" fill="#ff0000" />
<rect x="969.0" y="101" width="3" height="3" fill="#ff0000" />
<rect x="976.0" y="97" width="1" height="9" fill="#0000ff" />
<rect x="975.0" y="102" width="3" height="2" fill="#0000ff" />
<rect x="982.0" y="94" width="1" height="12" fill="#0000ff" />
<rect x="981.0" y="102" width="3" height="2" fill="#0000ff" />
<rect x="988.0" y="97" width="1" height="9" fill="#ff0000" />
<rect x="987.0" y="98" width="3" height="5" fill="#ff0000" />
<rect x="994.0" y="84" width="1" height="16" fill="#ff0000" />
<rect x="993.0" y="85" width="3" height="14" fill="#ff0000" />
<rect x="1000.0" y="76" width="1" height="14" fill="#ff0000" />
<rect x="999.0" y="78" width="3" height="8" fill="#ff0000" />
<rect x="1006.0" y="51" width="1" height="29" fill="#ff0000" />
<rect x="1005.0" y="52" width="3" height="27" fill="#ff0000" />
<rect x="1012.0" y="51" width="1" height="10" fill="#ff0000" />
<rect x="1011.0" y="51" width="3" height="3" fill="#ff0000" />
<rect x="1018.0" y="50" width="1" height="15" fill="#0000ff" />
<rect x="1017.0" y="51" width="3" height="12" fill="#0000ff" />
<rect x="1024.0" y="59" width="1" height="17" fill="#0000ff" />
<rect x="1023.0" y="62" width="3" height="14" fill="#0000ff" />
<rect x="1030.0" y="68" width="1" height="13" fill="#0000ff" />
<rect x="1029.0" y="75" width="3" height="1" fill="#0000ff" />
<rect x="1036.0" y="67" width="1" height="13" fill="#ff0000" />
<rect x="1035.0" y="70" width="3" height="9" fill="#ff0000" />
<rect x="1042.0" y="56" width="1" height="15" fill="#ff0000" />
<rect x="1041.0" y="60" width="3" height="10" fill="#ff0000" />
<rect x="1048.0" y="59" width="1" height="6" fill="#0000ff" />
<rect x="1047.0" y="60" width="3" height="3" fill="#0000ff" />
<rect x="1054.0" y="56" width="1" height="8" fill="#ff0000" />
<rect x="1053.0" y="57" width="3" height="4" fill="#ff0000" />
<rect x="1060.0" y="56" width="1" height="9" fill="#0000ff" />
<rect x="1059.0" y="57" width="3" height="5" fill="#0000ff" />
<rect x="1066.0" y="49" width="1" height="11" fill="#ff0000" />
<rect x="1065.0" y="55" width="3" height="4" fill="#ff0000" />
<rect x="1072.0" y="44" width="1" height="16" fill="#ff0000" />
<rect x="1071.0" y="48" width="3" height="9" fill="#ff0000" />
<rect x="1078.0" y="41" width="1" height="17" fill="#0000ff" />
<rect x="1077.0" y="48" width="3" height="9" fill="#0000ff" />
<rect x="1084.0" y="45" width="1" height="13" fill="#ff0000" />
<rect x="1083.0" y="49" width="3" height="8" fill="#ff0000" />
<rect x="1090.0" y="48" width="1" height="17" fill="#0000ff" />
<rect x="1089.0" y="49" width="3" height="15" fill="#0000ff" />
<rect x="1096.0" y="53" width="1" height="10" fill="#ff0000" />
<rect x="1095.0" y="54" width="3" height="8" fill="#ff0000" />
<rect x="1102.0" y="56" width="1" height="5" fill="#ff0000" />
<rect x="1101.0" y="56" width="3" height="1" fill="#ff0000" />
<rect x="1108.0" y="56" width="1" height="4" fill="#ff0000" />
<rect x="1107.0" y="56" width="3" height="1" fill="#ff0000" />
<rect x="1114.0" y="43" width="1" height="12" fill="#ff0000" />
<rect x="1113.0" y="44" width="3" height="10" fill="#ff0000" />
</g>
</g>
<g shape-rendering="crispEdges">
<rect x="3.0" y="336" width="3" height="5" fill="#008c00" />
<rect x="9.0" y="334" width="3" height="7" fill="#008c00" />
<rect x="15.0" y="337" width="3" height="4" fill="#008c00" />
<rect x="21.0" y="337" width="3" height="4" fill="#008c00" />
<rect x="27.0" y="339" width="3" height="2" fill="#008c00" />
<rect x="33.0" y="339" width="3" height="2" fill="#008c00" />
<rect x="39.0" y="285" width="3" height="56" fill="#008c00" />
<rect x="45.0" y="313" width="3" height="28" fill="#008c00" />
<rect x="51.0" y="294" width="3" height="47" fill="#008c00" />
<rect x="57.0" y="301" width="3" height="40" fill="#008c00" />
<rect x="63.0" y="298" width="3" height="43" fill="#008c00" />
<rect x="69.0" y="284" width="3" height="57" fill="#008c00" />
<rect x="75.0" y="305" width="3" height="36" fill="#008c00" />
<rect x="81.0" y="310" width="3" height="31" fill="#008c00" />
<rect x="87.0" y="320" width="3" height="21" fill="#008c00" />
<rect x="93.0" y="318" width="3" height="23" fill="#008c00" />
<rect x="99.0" y="321" width="3" height="20" fill="#008c00" />
<rect x="105.0" y="325" width="3" height="16" fill="#008c00" />
<rect x="111.0" y="313" width="3" height="28" fill="#008c00" />
<rect x="117.0" y="311" width="3" height="30" fill="#008c00" />
<rect x="123.0" y="316" width="3" height="25" fill="#008c00" />
<rect x="129.0" y="309" width="3" height="32" fill="#008c00" />
<rect x="135.0" y="315" width="3" height="26" fill="#008c00" />
<rect x="141.0" y="320" width="3" height="21" fill="#008c00" />
<rect x="147.0" y="316" width="3" height="25" fill="#008c00" />
<rect x="153.0" y="320" width="3" height="21" fill="#008c00" />
<rect x="159.0" y="324" width="3" height="17" fill="#008c00" />
<rect x="165.0" y="311" width="3" height="30" fill="#008c00" />
<rect x="171.0" y="327" width="3" height="14" fill="#008c00" />
<rect x="177.0" y="331" width="3" height="10" fill="#008c00" />
<rect x="183.0" y="306" width="3" height="35" fill="#008c00" />
<rect x="189.0" y="323" width="3" height="18" fill="#008c00" />
<rect x="195.0" y="329" width="3" height="12" fill="#008c00" />
<rect x="201.0" y="324" width="3" height="17" fill="#008c00" />
<rect x="207.0" y="324" width="3" height="17" fill="#008c00" />
<rect x="213.0" y="333" width="3" height="8" fill="#008c00" />
<rect x="219.0" y="335" width="3" height="6" fill="#008c00" />
<rect x="225.0" y="337" width="3" height="4" fill="#008c00" />
<rect x="231.0" y="337" width="3" height="4" fill="#008c00" />
<rect x="237.0" y="339" width="3" height="2" fill="#008c00" />
<rect x="243.0" y="338" width="3" height="3" fill="#008c00" />
<rect x="249.0" y="338" width="3" height="3" fill="#008c00" />
<rect x="255.0" y="335" width="3" height="6" fill="#008c00" />
<rect x="261.0" y="331" width="3" height="10" fill="#008c00" />
<rect x="267.0" y="333" width="3" height="8" fill="#008c00" />
<rect x="273.0" y="335" width="3" height="6" fill="#008c00" />
<rect x="279.0" y="328" width="3" height="13" fill="#008c00" />
<rect x="285.0" y="324" width="3" height="17" fill="#008c00" />
<rect x="291.0" y="278" width="3" height="63" fill="#008c00" />
<rect x="297.0" y="291" width="3" height="50" fill="#008c00" />
<rect x="303.0" y="308" width="3" height="33" fill="#008c00" />
<rect x="309.0" y="316" width="3" height="25" fill="#008c00" />
<rect x="315.0" y="316" width="3" height="25" fill="#008c00" />
<rect x="321.0" y="322" width="3" height="19" fill="#008c00" />
<rect x="327.0" y="307" width="3" height="34" fill="#008c00" />
<rect x="333.0" y="326" width="3" height="15" fill="#008c00" />
<rect x="339.0" y="318" width="3" height="23" fill="#008c00" />
<rect x="345.0" y="290" width="3" height="51" fill="#008c00" />
<rect x="351.0" y="289" width="3" height="52" fill="#008c00" />
<rect x="357.0" y="281" width="3" height="60" fill="#008c00" />
<rect x="363.0" y="273" width="3" height="68" fill="#008c00" />
<rect x="369.0" y="286" width="3" height="55" fill="#008c00" />
<rect x="375.0" y="318" width="3" height="23" fill="#008c00" />
<rect x="381.0" y="321" width="3" height="20" fill="#008c00" />
<rect x="387.0" y="308" width="3" height="33" fill="#008c00" />
<rect x="393.0" y="316" width="3" height="25" fill="#008c00" />
<rect x="399.0" y="308" width="3" height="33" fill="#008c00" />
<rect x="405.0" y="314" width="3" height="27" fill="#008c00" />
<rect x="411.0" y="322" width="3" height="19" fill="#008c00" />
<rect x="417.0" y="308" width="3" height="33" fill="#008c00" />
<rect x="423.0" y="298" width="3" height="43" fill="#008c00" />
<rect x="429.0" y="323" width="3" height="18" fill="#008c00" />
<rect x="435.0" y="311" width="3" height="30" fill="#008c00" />
<rect x="441.0" y="299" width="3" height="42" fill="#008c00" />
<rect x="447.0" y="299" width="3" height="42" fill="#008c00" />
<rect x="453.0" y="300" width="3" height="41" fill="#008c00" />
<rect x="459.0" y="310" width="3" height="31" fill="#008c00" />
<rect x="465.0" y="320" width="3" height="21" fill="#008c00" />
<rect x="471.0" y="291" width="3" height="50" fill="#008c00" />
<rect x="477.0" y="277" width="3" height="64" fill="#008c00" />
<rect x="489.0" y="335" width="3" height="6" fill="#008c00" />
<rect x="495.0" y="327" width="3" height="14" fill="#008c00" />
<rect x="501.0" y="333" width="3" height="8" fill="#008c00" />
<rect x="507.0" y="331" width="3" height="10" fill="#008c00" />
<rect x="513.0" y="332" width="3" height="9" fill="#008c00" />
<rect x="519.0" y="335" width="3" height="6" fill="#008c00" />
<rect x="525.0" y="335" width="3" height="6" fill="#008c00" />
<rect x="531.0" y="337" width="3" height="4" fill="#008c00" />
<rect x="537.0" y="337" width="3" height="4" fill="#008c00" />
<rect x="543.0" y="338" width="3" height="3" fill="#008c00" />
<rect x="549.0" y="335" width="3" height="6" fill="#008c00" />
<rect x="555.0" y="338" width="3" height="3" fill="#008c00" />
<rect x="561.0" y="339" width="3" height="2" fill="#008c00" />
<rect x="567.0" y="338" width="3" height="3" fill="#008c00" />
<rect x="573.0" y="336" width="3" height="5" fill="#008c00" />
<rect x="579.0" y="338" width="3" height="3" fill="#008c00" />
<rect x="585.0" y="337" width="3" height="4" fill="#008c00" />
<rect x="591.0" y="337" width="3" height="4" fill="#008c00" />
<rect x="597.0" y="337" width="3" height="4" fill="#008c00" />
<rect x="603.0" y="337" width="3" height="4" fill="#008c00" />
<rect x="609.0" y="338" width="3" height="3" fill="#008c00" />
<rect x="615.0" y="338" width="3" height="3" fill="#008c00" />
<rect x="621.0" y="339" width="3" height="2" fill="#008c00" />
<rect x="627.0" y="337" width="3" height="4" fill="#008c00" />
<rect x="633.0" y="335" width="3" height="6" fill="#008c00" />
<rect x="639.0" y="330" width="3" height="11" fill="#008c00" />
<rect x="645.0" y="335" width="3" height="6" fill="#008c00" />
<rect x="651.0" y="336" width="3" height="5" fill="#008c00" />
<rect x="657.0" y="336" width="3" height="5" fill="#008c00" />
<rect x="663.0" y="338" width="3" height="3" fill="#008c00" />
<rect x="669.0" y="336" width="3" height="5" fill="#008c00" />
<rect x="675.0" y="333" width="3" height="8" fill="#008c00" />
<rect x="681.0" y="335" width="3" height="6" fill="#008c00" />
<rect x="687.0" y="333" width="3" height="8" fill="#008c00" />
<rect x="693.0" y="333" width="3" height="8" fill="#008c00" />
<rect x="699.0" y="332" width="3" height="9" fill="#008c00" />
<rect x="705.0" y="336" width="3" height="5" fill="#008c00" />
<rect x="711.0" y="337" width="3" height="4" fill="#008c00" />
<rect x="717.0" y="336" width="3" height="5" fill="#008c00" />
<rect x="723.0" y="331" width="3" height="10" fill="#008c00" />
<rect x="729.0" y="339" width="3" height="2" fill="#008c00" />
<rect x="735.0" y="338" width="3" height="3" fill="#008c00" />
<rect x="741.0" y="335" width="3" height="6" fill="#008c00" />
<rect x="747.0" y="329" width="3" height="12" fill="#008c00" />
<rect x="753.0" y="334" width="3" height="7" fill="#008c00" />
<rect x="759.0" y="337" width="3" height="4" fill="#008c00" />
<rect x="765.0" y="336" width="3" height="5" fill="#008c00" />
<rect x="771.0" y="338" width="3" height="3" fill="#008c00" />
<rect x="777.0" y="336" width="3" height="5" fill="#008c00" />
<rect x="783.0" y="337" width="3" height="4" fill="#008c00" />
<rect x="789.0" y="336" width="3" height="5" fill="#008c00" />
<rect x="795.0" y="337" width="3" height="4" fill="#008c00" />
<rect x="801.0" y="337" width="3" height="4" fill="#008c00" />
<rect x="807.0" y="337" width="3" height="4" fill="#008c00" />
<rect x="813.0" y="339" width="3" height="2" fill="#008c00" />
<rect x="819.0" y="337" width="3" height="4" fill="#008c00" />
<rect x="825.0" y="338" width="3" height="3" fill="#008c00" />
<rect x="831.0" y="339" width="3" height="2" fill="#008c00" />
<rect x="837.0" y="339" width="3" height="2" fill="#008c00" />
<rect x="843.0" y="336" width="3" height="5" fill="#008c00" />
<rect x="849.0" y="337" width="3" height="4" fill="#008c00" />
<rect x="855.0" y="279" width="3" height="62" fill="#008c00" />
<rect x="861.0" y="313" width="3" height="28" fill="#008c00" />
<rect x="867.0" y="287" width="3" height="54" fill="#008c00" />
<rect x="873.0" y="321" width="3" height="20" fill="#008c00" />
<rect x="879.0" y="322" width="3" height="19" fill="#008c00" />
<rect x="885.0" y="321" width="3" height="20" fill="#008c00" />
<rect x="891.0" y="326" width="3" height="15" fill="#008c00" />
<rect x="897.0" y="324" width="3" height="17" fill="#008c00" />
<rect x="903.0" y="332" width="3" height="9" fill="#008c00" />
<rect x="909.0" y="328" width="3" height="13" fill="#008c00" />
<rect x="915.0" y="334" width="3" height="7" fill="#008c00" />
<rect x="921.0" y="327" width="3" height="14" fill="#008c00" />
<rect x="927.0" y="322" width="3" height="19" fill="#008c00" />
<rect x="933.0" y="323" width="3" height="18" fill="#008c00" />
<rect x="939.0" y="325" width="3" height="16" fill="#008c00" />
<rect x="945.0" y="326" width="3" height="15" fill="#008c00" />
<rect x="951.0" y="322" width="3" height="19" fill="#008c00" />
<rect x="957.0" y="324" width="3" height="17" fill="#008c00" />
<rect x="963.0" y="325" width="3" height="16" fill="#008c00" />
<rect x="969.0" y="330" width="3" height="11" fill="#008c00" />
<rect x="975.0" y="330" width="3" height="11" fill="#008c00" />
<rect x="981.0" y="330" width="3" height="11" fill="#008c00" />
<rect x="987.0" y="333" width="3" height="8" fill="#008c00" />
<rect x="993.0" y="329" width="3" height="12" fill="#008c00" />
<rect x="999.0" y="328" width="3" height="13" fill="#008c00" />
<rect x="1005.0" y="316" width="3" height="25" fill="#008c00" />
<rect x="1011.0" y="320" width="3" height="21" fill="#008c00" />
<rect x="1017.0" y="328" width="3" height="13" fill="#008c00" />
<rect x="1023.0" y="327" width="3" height="14" fill="#008c00" />
<rect x="1029.0" y="328" width="3" height="13" fill="#008c00" />
<rect x="1035.0" y="332" width="3" height="9" fill="#008c00" />
<rect x="1041.0" y="332" width="3" height="9" fill="#008c00" />
<rect x="1047.0" y="333" width="3" height="8" fill="#008c00" />
<rect x="1053.0" y="331" width="3" height="10" fill="#008c00" />
<rect x="1059.0" y="332" width="3" height="9" fill="#008c00" />
<rect x="1065.0" y="330" width="3" height="11" fill="#008c00" />
<rect x="1071.0" y="331" width="3" height="10" fill="#008c00" />
<rect x="1077.0" y="328" width="3" height="13" fill="#008c00" />
<rect x="1083.0" y="332" width="3" height="9" fill="#008c00" />
<rect x="1089.0" y="329" width="3" height="12" fill="#008c00" />
<rect x="1095.0" y="331" width="3" height="10" fill="#008c00" />
<rect x="1101.0" y="336" width="3" height="5" fill="#008c00" />
<rect x="1107.0" y="335" width="3" height="6" fill="#008c00" />
<rect x="1113.0" y="334" width="3" height="7" fill="#008c00" />
<rect x="1119.0" y="335" width="3" height="6" fill="#008c00" />
</g>
<clipPath id="c2"><rect x="4" y="352" width="1116" height="100"/></clipPath>
<g clip-path="url(#c2)" shape-rendering="crispEdges">
<rect x="4.0" y="405" width="1" height="9" fill="#ff0000" />
<rect x="10.0" y="405" width="1" height="9" fill="#ff0000" />
<rect x="16.0" y="405" width="1" height="9" fill="#ff0000" />
<rect x="22.0" y="405" width="1" height="9" fill="#ff0000" />
<rect x="28.0" y="405" width="1" height="9" fill="#ff0000" />
<rect x="34.0" y="406" width="1" height="8" fill="#ff0000" />
<rect x="40.0" y="404" width="1" height="10" fill="#ff0000" />
<rect x="46.0" y="403" width="1" height="11" fill="#ff0000" />
<rect x="52.0" y="404" width="1" height="10" fill="#ff0000" />
<rect x="58.0" y="404" width="1" height="10" fill="#ff0000" />
<rect x="64.0" y="403" width="1" height="11" fill="#ff0000" />
<rect x="70.0" y="401" width="1" height="13" fill="#ff0000" />
<rect x="76.0" y="402" width="1" height="12" fill="#ff0000" />
<rect x="82.0" y="403" width="1" height="11" fill="#ff0000" />
<rect x="88.0" y="405" width="1" height="9" fill="#ff0000" />
<rect x="94.0" y="406" width="1" height="8" fill="#ff0000" />
<rect x="100.0" y="408" width="1" height="6" fill="#ff0000" />
<rect x="106.0" y="410" width="1" height="4" fill="#ff0000" />
<rect x="112.0" y="412" width="1" height="2" fill="#ff0000" />
<rect x="118.0" y="413" width="1" height="1" fill="#ff0000" />
<rect x="124.0" y="415" width="1" height="1" fill="#ff0000" />
<rect x="130.0" y="415" width="1" height="1" fill="#ff0000" />
<rect x="136.0" y="415" width="1" height="2" fill="#ff0000" />
<rect x="142.0" y="415" width="1" height="2" fill="#ff0000" />
<rect x="148.0" y="415" width="1" height="1" fill="#ff0000" />
<rect x="154.0" y="414" width="1" height="1" fill="#ff0000" />
<rect x="160.0" y="415" width="1" height="1" fill="#ff0000" />
<rect x="166.0" y="415" width="1" height="2" fill="#ff0000" />
<rect x="172.0" y="415" width="1" height="2" fill="#ff0000" />
<rect x="178.0" y="415" width="1" height="3" fill="#ff0000" />
<rect x="184.0" y="415" width="1" height="3" fill="#ff0000" />
<rect x="190.0" y="415" width="1" height="3" fill="#ff0000" />
<rect x="196.0" y="415" width="1" height="4" fill="#ff0000" />
<rect x="202.0" y="415" width="1" height="5" fill="#ff0000" />
<rect x="208.0" y="415" width="1" height="5" fill="#ff0000" />
<rect x="214.0" y="415" width="1" height="4" fill="#ff0000" />
<rect x="220.0" y="415" width="1" height="3" fill="#ff0000" />
<rect x="226.0" y="415" width="1" height="3" fill="#ff0000" />
<rect x="232.0" y="415" width="1" height="3" fill="#ff0000" />
<rect x="238.0" y="415" width="1" height="3" fill="#ff0000" />
<rect x="244.0" y="415" width="1" height="2" fill="#ff0000" />
<rect x="250.0" y="415" width="1" height="2" fill="#ff0000" />
<rect x="256.0" y="415" width="1" height="1" fill="#ff0000" />
<rect x="262.0" y="415" width="1" height="1" fill="#ff0000" />
<rect x="268.0" y="415" width="1" height="1" fill="#ff0000" />
<rect x="274.0" y="415" width="1" height="2" fill="#ff0000" />
<rect x="280.0" y="415" width="1" height="3" fill="#ff0000" />
<rect x="286.0" y="415" width="1" height="4" fill="#ff0000" />
<rect x="292.0" y="415" width="1" height="7" fill="#ff0000" />
<rect x="298.0" y="415" width="1" height="7" fill="#ff0000" />
<rect x="304.0" y="415" width="1" height="6" fill="#ff0000" />
<rect x="310.0" y="415" width="1" height="5" fill="#ff0000" />
<rect x="316.0" y="415" width="1" height="5" fill="#ff0000" />
<rect x="322.0" y="415" width="1" height="3" fill="#ff0000" />
<rect x="328.0" y="415" width="1" height="2" fill="#ff0000" />
<rect x="334.0" y="415" width="1" height="2" fill="#ff0000" />
<rect x="340.0" y="415" width="1" height="2" fill="#ff0000" />
<rect x="346.0" y="415" width="1" height="4" fill="#ff0000" />
<rect x="352.0" y="415" width="1" height="2" fill="#ff0000" />
<rect x="358.0" y="411" width="1" height="3" fill="#ff0000" />
<rect x="364.0" y="407" width="1" height="7" fill="#ff0000" />
<rect x="370.0" y="407" width="1" height="7" fill="#ff0000" />
<rect x="376.0" y="407" width="1" height="7" fill="#ff0000" />
<rect x="382.0" y="405" width="1" height="9" fill="#ff0000" />
<rect x="388.0" y="406" width="1" height="8" fill="#ff0000" />
<rect x="394.0" y="407" width="1" height="7" fill="#ff0000" />
<rect x="400.0" y="408" width="1" height="6" fill="#ff0000" />
<rect x="406.0" y="409" width="1" height="5" fill="#ff0000" />
<rect x="412.0" y="409" width="1" height="5" fill="#ff0000" />
<rect x="418.0" y="408" width="1" height="6" fill="#ff0000" />
<rect x="424.0" y="408" width="1" height="6" fill="#ff0000" />
<rect x="430.0" y="407" width="1" height="7" fill="#ff0000" />
<rect x="436.0" y="406" width="1" height="8" fill="#ff0000" />
<rect x="442.0" y="404" width="1" height="10" fill="#ff0000" />
<rect x="448.0" y="400" width="1" height="14" fill="#ff0000" />
<rect x="454.0" y="402" width="1" height="12" fill="#ff0000" />
<rect x="460.0" y="406" width="1" height="8" fill="#ff0000" />
<rect x="466.0" y="410" width="1" height="4" fill="#ff0000" />
<rect x="472.0" y="413" width="1" height="1" fill="#ff0000" />
<rect x="478.0" y="415" width="1" height="5" fill="#ff0000" />
<rect x="484.0" y="415" width="1" height="9" fill="#ff0000" />
<rect x="490.0" y="415" width="1" height="13" fill="#ff0000" />
<rect x="496.0" y="415" width="1" height="14" fill="#ff0000" />
<rect x="502.0" y="415" width="1" height="15" fill="#ff0000" />
<rect x="508.0" y="415" width="1" height="16" fill="#ff0000" />
<rect x="514.0" y="415" width="1" height="15" fill="#ff0000" />
<rect x="520.0" y="415" width="1" height="13" fill="#ff0000" />
<rect x="526.0" y="415" width="1" height="12" fill="#ff0000" />
<rect x="532.0" y="415" width="1" height="10" fill="#ff0000" />
<rect x="538.0" y="415" width="1" height="8" fill="#ff0000" />
<rect x="544.0" y="415" width="1" height="6" fill="#ff0000" />
<rect x="550.0" y="415" width="1" height="4" fill="#ff0000" />
<rect x="556.0" y="415" width="1" height="3" fill="#ff0000" />
<rect x="562.0" y="415" width="1" height="2" fill="#ff0000" />
<rect x="568.0" y="415" width="1" height="1" fill="#ff0000" />
<rect x="574.0" y="415" width="1" height="1" fill="#ff0000" />
<rect x="580.0" y="415" width="1" height="1" fill="#ff0000" />
<rect x="586.0" y="415" width="1" height="1" fill="#ff0000" />
<rect x="592.0" y="414" width="1" height="1" fill="#ff0000" />
<rect x="598.0" y="413" width="1" height="1" fill="#ff0000" />
<rect x="604.0" y="413" width="1" height="1" fill="#ff0000" />
<rect x="610.0" y="413" width="1" height="1" fill="#ff0000" />
<rect x="616.0" y="413" width="1" height="1" fill="#ff0000" />
<rect x="622.0" y="413" width="1" height="1" fill="#ff0000" />
<rect x="628.0" y="413" width="1" height="1" fill="#ff0000" />
<rect x="634.0" y="414" width="1" height="1" fill="#ff0000" />
<rect x="640.0" y="414" width="1" height="1" fill="#ff0000" />
<rect x="646.0" y="414" width="1" height="1" fill="#ff0000" />
<rect x="652.0" y="413" width="1" height="1" fill="#ff0000" />
<rect x="658.0" y="413" width="1" height="1" fill="#ff0000" />
<rect x="664.0" y="413" width="1" height="1" fill="#ff0000" />
<rect x="670.0" y="413" width="1" height="1" fill="#ff0000" />
<rect x="676.0" y="414" width="1" height="1" fill="#ff0000" />
<rect x="682.0" y="415" width="1" height="1" fill="#ff0000" />
<rect x="688.0" y="415" width="1" height="1" fill="#ff0000" />
<rect x="694.0" y="415" width="1" height="2" fill="#ff0000" />
<rect x="700.0" y="415" width="1" height="2" fill="#ff0000" />
<rect x="706.0" y="415" width="1" height="1" fill="#ff0000" />
<rect x="712.0" y="414" width="1" height="1" fill="#ff0000" />
<rect x="718.0" y="413" width="1" height="1" fill="#ff0000" />
<rect x="724.0" y="413" width="1" height="1" fill="#ff0000" />
<rect x="730.0" y="413" width="1" height="1" fill="#ff0000" />
<rect x="736.0" y="413" width="1" height="1" fill="#ff0000" />
<rect x="742.0" y="413" width="1" height="1" fill="#ff0000" />
<rect x="748.0" y="414" width="1" height="1" fill="#ff0000" />
<rect x="754.0" y="414" width="1" height="1" fill="#ff0000" />
<rect x="760.0" y="414" width="1" height="1" fill="#ff0000" />
<rect x="766.0" y="413" width="1" height="1" fill="#ff0000" />
<rect x="772.0" y="413" width="1" height="1" fill="#ff0000" />
<rect x="778.0" y="412" width="1" height="2" fill="#ff0000" />
<rect x="784.0" y="411" width="1" height="3" fill="#ff0000" />
<rect x="790.0" y="409" width="1" height="5" fill="#ff0000" />
<rect x="796.0" y="409" width="1" height="5" fill="#ff0000" />
<rect x="802.0" y="409" width="1" height="5" fill="#ff0000" />
<rect x="808.0" y="408" width="1" height="6" fill="#ff0000" />
<rect x="814.0" y="409" width="1" height="5" fill="#ff0000" />
<rect x="820.0" y="410" width="1" height="4" fill="#ff0000" />
<rect x="826.0" y="410" width="1" height="4" fill="#ff0000" />
<rect x="832.0" y="410" width="1" height="4" fill="#ff0000" />
<rect x="838.0" y="410" width="1" height="4" fill="#ff0000" />
<rect x="844.0" y="410" width="1" height="4" fill="#ff0000" />
<rect x="850.0" y="410" width="1" height="4" fill="#ff0000" />
<rect x="856.0" y="413" width="1" height="1" fill="#ff0000" />
<rect x="862.0" y="412" width="1" height="2" fill="#ff0000" />
<rect x="868.0" y="409" width="1" height="5" fill="#ff0000" />
<rect x="874.0" y="408" width="1" height="6" fill="#ff0000" />
<rect x="880.0" y="407" width="1" height="7" fill="#ff0000" />
<rect x="886.0" y="406" width="1" height="8" fill="#ff0000" />
<rect x="892.0" y="408" width="1" height="6" fill="#ff0000" />
<rect x="898.0" y="409" width="1" height="5" fill="#ff0000" />
<rect x="904.0" y="409" width="1" height="5" fill="#ff0000" />
<rect x="910.0" y="409" width="1" height="5" fill="#ff0000" />
<rect x="916.0" y="408" width="1" height="6" fill="#ff0000" />
<rect x="922.0" y="408" width="1" height="6" fill="#ff0000" />
<rect x="928.0" y="408" width="1" height="6" fill="#ff0000" />
<rect x="934.0" y="410" width="1" height="4" fill="#ff0000" />
<rect x="940.0" y="413" width="1" height="1" fill="#ff0000" />
<rect x="946.0" y="414" width="1" height="1" fill="#ff0000" />
<rect x="952.0" y="413" width="1" height="1" fill="#ff0000" />
<rect x="958.0" y="411" width="1" height="3" fill="#ff0000" />
<rect x="964.0" y="411" width="1" height="3" fill="#ff0000" />
<rect x="970.0" y="411" width="1" height="3" fill="#ff0000" />
<rect x="976.0" y="411" width="1" height="3" fill="#ff0000" />
<rect x="982.0" y="412" width="1" height="2" fill="#ff0000" />
<rect x="988.0" y="412" width="1" height="2" fill="#ff0000" />
<rect x="994.0" y="411" width="1" height="3" fill="#ff0000" />
<rect x="1000.0" y="410" width="1" height="4" fill="#ff0000" />
<rect x="1006.0" y="408" width="1" height="6" fill="#ff0000" />
<rect x="1012.0" y="406" width="1" height="8" fill="#ff0000" />
<rect x="1018.0" y="408" width="1" height="6" fill="#ff0000" />
<rect x="1024.0" y="410" width="1" height="4" fill="#ff0000" />
<rect x="1030.0" y="413" width="1" height="1" fill="#ff0000" />
<rect x="1036.0" y="414" width="1" height="1" fill="#ff0000" />
<rect x="1042.0" y="414" width="1" height="1" fill="#ff0000" />
<rect x="1048.0" y="414" width="1" height="1" fill="#ff0000" />
<rect x="1054.0" y="414" width="1" height="1" fill="#ff0000" />
<rect x="1060.0" y="415" width="1" height="1" fill="#ff0000" />
<rect x="1066.0" y="415" width="1" height="1" fill="#ff0000" />
<rect x="1072.0" y="415" width="1" height="1" fill="#ff0000" />
<rect x="1078.0" y="415" width="1" height="2" fill="#ff0000" />
<rect x="1084.0" y="415" width="1" height="2" fill="#ff0000" />
<rect x="1090.0" y="415" width="1" height="4" fill="#ff0000" />
<rect x="1096.0" y="415" width="1" height="4" fill="#ff0000" />
<rect x="1102.0" y="415" width="1" height="4" fill="#ff0000" />
<rect x="1108.0" y="415" width="1" height="4" fill="#ff0000" />
<rect x="1114.0" y="415" width="1" height="3" fill="#ff0000" />
<rect x="1120.0" y="415" width="1" height="2" fill="#ff0000" />
<polyline points="4.5,428.6 10.5,426.3 16.5,424.6 22.5,422.1 28.5,419.9 34.5,418.7 40.5,414.3 46.5,410.0 52.5,409.0 58.5,406.6 64.5,402.8 70.5,397.4 76.5,395.6 82.5,394.1 88.5,394.1 94.5,392.8 100.5,393.1 106.5,394.0 112.5,395.4 118.5,396.2 124.5,398.1 130.5,399.0 136.5,400.0 142.5,400.2 148.5,399.8 154.5,399.2 160.5,399.7 166.5,401.0 172.5,401.7 178.5,403.2 184.5,404.9 190.5,405.7 196.5,407.8 202.5,410.0 208.5,410.7 214.5,411.2 220.5,411.1 226.5,411.8 232.5,412.5 238.5,412.9 244.5,413.1 250.5,412.8 256.5,413.0 262.5,412.8 268.5,413.4 274.5,414.4 280.5,416.0 286.5,418.0 292.5,422.7 298.5,424.2 304.5,424.7 310.5,425.4 316.5,426.2 322.5,425.1 328.5,424.6 334.5,424.8 340.5,425.3 346.5,428.3 352.5,426.9 358.5,421.4 364.5,415.8 370.5,414.3 376.5,411.7 382.5,408.0 388.5,406.3 394.5,405.8 400.5,405.0 406.5,405.7 412.5,404.1 418.5,401.9 424.5,399.5 430.5,397.0 436.5,393.6 442.5,389.8 448.5,382.7 454.5,381.1 460.5,383.2 466.5,386.5 472.5,388.7 478.5,396.4 484.5,403.0 490.5,409.3 496.5,414.7 502.5,419.2 508.5,423.8 514.5,426.7 520.5,428.1 526.5,429.7 532.5,430.3 538.5,430.5 544.5,430.2 550.5,429.4 556.5,429.1 562.5,428.1 568.5,427.8 574.5,428.4 580.5,428.0 586.5,428.4 592.5,427.7 598.5,426.8 604.5,426.0 610.5,425.4 616.5,425.0 622.5,424.5 628.5,424.3 634.5,425.2 640.5,425.8 646.5,425.2 652.5,424.1 658.5,423.7 664.5,423.2 670.5,423.2 676.5,424.3 682.5,425.3 688.5,426.2 694.5,427.2 700.5,427.6 706.5,427.3 712.5,426.4 718.5,425.3 724.5,424.6 730.5,424.8 736.5,424.2 742.5,423.8 748.5,424.4 754.5,424.5 760.5,424.2 766.5,423.9 772.5,423.2 778.5,421.6 784.5,419.8 790.5,417.2 796.5,415.4 802.5,413.7 808.5,412.0 814.5,411.1 820.5,410.9 826.5,410.3 832.5,409.5 838.5,408.8 844.5,407.9 850.5,406.9 856.5,409.6 862.5,407.4 868.5,403.7 874.5,401.6 880.5,398.2 886.5,394.9 892.5,396.0 898.5,395.5 904.5,393.8 910.5,392.4 916.5,390.6 922.5,388.4 928.5,387.6 934.5,388.2 940.5,390.9 946.5,391.9 952.5,390.3 958.5,388.4 964.5,386.9 970.5,385.9 976.5,385.8 982.5,386.1 988.5,385.8 994.5,384.4 1000.5,382.6 1006.5,378.2 1012.5,375.2 1018.5,374.7 1024.5,376.4 1030.5,378.3 1036.5,379.3 1042.5,379.3 1048.5,380.0 1054.5,380.3 1060.5,381.5 1066.5,381.9 1072.5,381.7 1078.5,383.1 1084.5,383.5 1090.5,386.1 1096.5,387.1 1102.5,388.5 1108.5,389.9 1114.5,389.8 1120.5,388.8" fill="none" stroke="#ffff00" stroke-width="1" stroke-linejoin="round" stroke-linecap="butt"/>
<polyline points="4.5,437.6 10.5,435.3 16.5,433.2 22.5,431.0 28.5,428.7 34.5,426.7 40.5,424.3 46.5,421.4 52.5,418.9 58.5,416.5 64.5,413.7 70.5,410.5 76.5,407.5 82.5,404.8 88.5,402.7 94.5,400.7 100.5,399.2 106.5,398.1 112.5,397.6 118.5,397.3 124.5,397.5 130.5,397.8 136.5,398.2 142.5,398.6 148.5,398.8 154.5,398.9 160.5,399.1 166.5,399.5 172.5,399.9 178.5,400.6 184.5,401.4 190.5,402.3 196.5,403.4 202.5,404.7 208.5,405.9 214.5,407.0 220.5,407.8 226.5,408.6 232.5,409.4 238.5,410.1 244.5,410.7 250.5,411.1 256.5,411.5 262.5,411.7 268.5,412.1 274.5,412.5 280.5,413.2 286.5,414.2 292.5,415.9 298.5,417.6 304.5,419.0 310.5,420.3 316.5,421.5 322.5,422.2 328.5,422.7 334.5,423.1 340.5,423.5 346.5,424.5 352.5,424.9 358.5,424.2 364.5,422.5 370.5,420.9 376.5,419.1 382.5,416.9 388.5,414.7 394.5,412.9 400.5,411.4 406.5,410.2 412.5,409.0 418.5,407.6 424.5,406.0 430.5,404.2 436.5,402.1 442.5,399.6 448.5,396.2 454.5,393.2 460.5,391.2 466.5,390.3 472.5,389.9 478.5,391.2 484.5,393.6 490.5,396.7 496.5,400.3 502.5,404.1 508.5,408.0 514.5,411.8 520.5,415.0 526.5,418.0 532.5,420.4 538.5,422.5 544.5,424.0 550.5,425.1 556.5,425.9 562.5,426.3 568.5,426.6 574.5,427.0 580.5,427.2 586.5,427.4 592.5,427.5 598.5,427.3 604.5,427.1 610.5,426.7 616.5,426.4 622.5,426.0 628.5,425.7 634.5,425.6 640.5,425.6 646.5,425.5 652.5,425.2 658.5,424.9 664.5,424.6 670.5,424.3 676.5,424.3 682.5,424.5 688.5,424.8 694.5,425.3 700.5,425.8 706.5,426.1 712.5,426.2 718.5,426.0 724.5,425.7 730.5,425.5 736.5,425.2 742.5,425.0 748.5,424.9 754.5,424.8 760.5,424.7 766.5,424.5 772.5,424.2 778.5,423.7 784.5,422.9 790.5,421.8 796.5,420.5 802.5,419.1 808.5,417.7 814.5,416.4 820.5,415.3 826.5,414.3 832.5,413.3 838.5,412.4 844.5,411.5 850.5,410.6 856.5,410.4 862.5,409.8 868.5,408.6 874.5,407.2 880.5,405.4 886.5,403.3 892.5,401.8 898.5,400.5 904.5,399.2 910.5,397.8 916.5,396.4 922.5,394.8 928.5,393.4 934.5,392.3 940.5,392.0 946.5,392.0 952.5,391.7 958.5,391.0 964.5,390.2 970.5,389.4 976.5,388.6 982.5,388.1 988.5,387.7 994.5,387.0 1000.5,386.1 1006.5,384.5 1012.5,382.7 1018.5,381.1 1024.5,380.1 1030.5,379.8 1036.5,379.7 1042.5,379.6 1048.5,379.7 1054.5,379.8 1060.5,380.1 1066.5,380.5 1072.5,380.7 1078.5,381.2 1084.5,381.7 1090.5,382.6 1096.5,383.5 1102.5,384.5 1108.5,385.6 1114.5,386.4 1120.5,386.9" fill="none" stroke="#0000ff" stroke-width="1" stroke-linejoin="round" stroke-linecap="butt"/>
</g>
<clipPath id="c3"><rect x="4" y="452" width="1116" height="103"/></clipPath>
<g clip-path="url(#c3)" shape-rendering="crispEdges">
<rect x="4" y="487" width="1116" height="1" fill="#0000ff" />
<rect x="4" y="529" width="1116" height="1" fill="#ff0000" />
<polyline points="4.5,487.3 10.5,485.7 16.5,484.9 22.5,483.8 28.5,483.0 34.5,482.5 40.5,480.9 46.5,480.1 52.5,481.7 58.5,483.3 64.5,482.8 70.5,480.4 76.5,479.6 82.5,482.2 88.5,486.0 94.5,488.0 100.5,489.7 106.5,491.8 112.5,494.5 118.5,498.0 124.5,503.0 130.5,506.4 136.5,509.4 142.5,510.0 148.5,509.3 154.5,506.0 160.5,501.9 166.5,499.8 172.5,500.7 178.5,504.7 184.5,508.4 190.5,511.7 196.5,514.8 202.5,518.3 208.5,521.9 214.5,522.6 220.5,519.7 226.5,516.0 232.5,514.0 238.5,515.3 244.5,515.8 250.5,513.5 256.5,509.2 262.5,504.6 268.5,503.6 274.5,505.0 280.5,511.0 286.5,518.2 292.5,526.9 298.5,530.4 304.5,528.4 310.5,521.4 316.5,516.1 322.5,512.7 328.5,510.9 334.5,508.6 340.5,509.2 346.5,513.8 352.5,517.5 358.5,514.6 364.5,502.7 370.5,492.4 376.5,489.1 382.5,491.3 388.5,491.9 394.5,490.5 400.5,490.1 406.5,492.1 412.5,493.0 418.5,491.6 424.5,487.3 430.5,483.2 436.5,479.8 442.5,478.3 448.5,477.2 454.5,478.7 460.5,483.4 466.5,493.2 472.5,503.2 478.5,512.2 484.5,518.2 490.5,524.6 496.5,529.6 502.5,533.5 508.5,535.7 514.5,537.5 520.5,538.5 526.5,538.4 532.5,537.7 538.5,536.9 544.5,535.6 550.5,533.6 556.5,531.3 562.5,526.1 568.5,518.6 574.5,511.0 580.5,507.9 586.5,511.3 592.5,513.4 598.5,514.6 604.5,510.1 610.5,508.3 616.5,508.1 622.5,511.6 628.5,515.8 634.5,520.3 640.5,525.3 646.5,526.8 652.5,522.2 658.5,513.4 664.5,506.6 670.5,506.4 676.5,512.4 682.5,522.2 688.5,530.7 694.5,535.0 700.5,533.7 706.5,529.7 712.5,523.4 718.5,516.5 724.5,510.2 730.5,508.4 736.5,510.1 742.5,513.4 748.5,516.2 754.5,519.0 760.5,520.7 766.5,519.4 772.5,515.3 778.5,508.1 784.5,499.2 790.5,489.0 796.5,481.9 802.5,479.1 808.5,479.8 814.5,481.5 820.5,483.5 826.5,485.7 832.5,486.8 838.5,485.5 844.5,482.8 850.5,479.9 856.5,482.7 862.5,488.3 868.5,495.9 874.5,495.6 880.5,491.4 886.5,485.4 892.5,483.7 898.5,485.0 904.5,487.2 910.5,486.7 916.5,483.5 922.5,479.3 928.5,477.0 934.5,477.2 940.5,480.9 946.5,486.7 952.5,490.6 958.5,489.2 964.5,483.1 970.5,478.2 976.5,476.6 982.5,478.9 988.5,480.8 994.5,481.3 1000.5,479.3 1006.5,476.9 1012.5,475.1 1018.5,475.3 1024.5,477.9 1030.5,483.1 1036.5,488.8 1042.5,491.7 1048.5,491.3 1054.5,488.3 1060.5,486.5 1066.5,484.7 1072.5,483.9 1078.5,483.7 1084.5,485.1 1090.5,490.7 1096.5,495.0 1102.5,500.0 1108.5,499.7 1114.5,497.7 1120.5,491.6" fill="none" stroke="#ff0000" stroke-width="1" stroke-linejoin="round" stroke-linecap="butt"/>
<polyline points="4.5,484.4 10.5,483.3 16.5,485.4 22.5,483.3 28.5,482.2 34.5,482.8 40.5,479.3 46.5,478.2 52.5,487.0 58.5,485.4 64.5,480.1 70.5,477.3 76.5,482.8 82.5,485.7 88.5,490.2 94.5,487.8 100.5,491.3 106.5,494.5 112.5,498.9 118.5,502.3 124.5,507.7 130.5,509.1 136.5,511.3 142.5,509.5 148.5,507.1 154.5,501.3 160.5,497.4 166.5,500.8 172.5,503.9 178.5,509.3 184.5,512.0 190.5,514.0 196.5,518.5 202.5,522.3 208.5,524.9 214.5,520.7 220.5,513.6 226.5,513.6 232.5,515.0 238.5,517.4 244.5,514.9 250.5,508.3 256.5,504.5 262.5,501.0 268.5,505.4 274.5,508.6 280.5,519.1 286.5,527.0 292.5,534.4 298.5,529.7 304.5,521.1 310.5,513.6 316.5,513.8 322.5,510.7 328.5,508.3 334.5,506.9 340.5,512.4 346.5,522.2 352.5,518.1 358.5,503.6 364.5,486.6 370.5,487.0 376.5,493.6 382.5,493.1 388.5,489.1 394.5,489.3 400.5,492.0 406.5,495.0 412.5,492.0 418.5,487.9 424.5,482.1 430.5,479.5 436.5,477.9 442.5,477.6 448.5,476.2 454.5,482.4 460.5,491.6 466.5,505.7 472.5,512.1 478.5,518.9 484.5,523.7 490.5,531.3 496.5,533.6 502.5,535.6 508.5,537.9 514.5,538.9 520.5,538.7 526.5,537.6 532.5,536.8 538.5,536.3 544.5,533.7 550.5,530.9 556.5,529.2 562.5,518.0 568.5,508.5 574.5,506.3 580.5,509.0 586.5,518.6 592.5,512.7 598.5,512.6 604.5,505.1 610.5,507.2 616.5,512.1 622.5,515.5 628.5,519.8 634.5,525.5 640.5,530.4 646.5,524.6 652.5,511.7 658.5,504.1 664.5,504.0 670.5,511.2 676.5,522.2 682.5,533.2 688.5,536.9 694.5,534.8 700.5,529.4 706.5,524.9 712.5,515.8 718.5,508.7 724.5,506.1 730.5,510.5 736.5,513.7 742.5,515.9 748.5,519.2 754.5,522.0 760.5,521.1 766.5,515.1 772.5,509.6 778.5,499.7 784.5,488.3 790.5,479.2 796.5,478.2 802.5,479.9 808.5,481.3 814.5,483.2 820.5,486.0 826.5,487.9 832.5,486.4 838.5,482.3 844.5,479.8 850.5,477.6 856.5,490.7 862.5,496.7 868.5,500.2 874.5,489.9 880.5,484.1 886.5,482.2 892.5,484.8 898.5,488.1 904.5,488.8 910.5,483.2 916.5,478.7 922.5,476.1 928.5,476.2 934.5,479.2 940.5,487.4 946.5,493.6 952.5,490.8 958.5,483.1 964.5,475.2 970.5,476.3 976.5,478.2 982.5,482.1 988.5,481.9 994.5,479.8 1000.5,476.2 1006.5,474.8 1012.5,474.4 1018.5,476.7 1024.5,482.6 1030.5,490.1 1036.5,493.8 1042.5,491.3 1048.5,488.7 1054.5,484.9 1060.5,485.9 1066.5,483.3 1072.5,482.3 1078.5,485.4 1084.5,487.7 1090.5,499.0 1096.5,498.5 1102.5,502.5 1108.5,498.0 1114.5,492.6 1120.5,484.2" fill="none" stroke="#0000ff" stroke-width="1" stroke-linejoin="round" stroke-linecap="butt"/>
</g>
<g shape-rendering="crispEdges">
<rect x="3" y="21" width="1" height="535" fill="#000" />
<rect x="1120" y="21" width="1" height="562" fill="#000" />
<rect x="3" y="555" width="1180" height="1" fill="#000" />
<rect x="4" y="341" width="1117" height="1" fill="#000" />
<rect x="4" y="414" width="1116" height="1" fill="#8c8c8c" />
<rect x="16.0" y="555" width="1" height="5" fill="#000" />
<rect x="64.0" y="555" width="1" height="5" fill="#000" />
<rect x="160.0" y="555" width="1" height="5" fill="#000" />
<rect x="256.0" y="555" width="1" height="5" fill="#000" />
<rect x="352.0" y="555" width="1" height="5" fill="#000" />
<rect x="448.0" y="555" width="1" height="5" fill="#000" />
<rect x="556.0" y="555" width="1" height="5" fill="#000" />
<rect x="652.0" y="555" width="1" height="5" fill="#000" />
<rect x="748.0" y="555" width="1" height="5" fill="#000" />
<rect x="844.0" y="555" width="1" height="5" fill="#000" />
<rect x="940.0" y="555" width="1" height="5" fill="#000" />
<rect x="1036.0" y="555" width="1" height="10" fill="#000" />
<rect x="1121" y="39" width="5" height="1" fill="#000" />
<rect x="1121" y="79" width="5" height="1" fill="#000" />
<rect x="1121" y="120" width="5" height="1" fill="#000" />
<rect x="1121" y="160" width="5" height="1" fill="#000" />
<rect x="1121" y="201" width="5" height="1" fill="#000" />
<rect x="1121" y="242" width="5" height="1" fill="#000" />
<rect x="1121" y="273" width="5" height="1" fill="#000" />
<rect x="1121" y="310" width="5" height="1" fill="#000" />
<rect x="1121" y="373" width="5" height="1" fill="#000" />
<rect x="1121" y="412" width="5" height="1" fill="#000" />
<rect x="1121" y="473" width="5" height="1" fill="#000" />
<rect x="1121" y="511" width="5" height="1" fill="#000" />
<rect x="1168" y="23" width="15" height="12" fill="#fff" />
<rect x="1168" y="23" width="15" height="1" fill="#9c9c9c" />
<rect x="1168" y="23" width="1" height="12" fill="#9c9c9c" />
<rect x="1182" y="23" width="1" height="12" fill="#9c9c9c" />
<rect x="1168" y="34" width="15" height="1" fill="#9c9c9c" />
<polygon points="1171,26.5 1180,26.5 1175.5,31.5" fill="#707070" stroke="#333" stroke-width="0.6" shape-rendering="auto"/>
<rect x="1168" y="257" width="15" height="12" fill="#fff" />
<rect x="1168" y="257" width="15" height="1" fill="#9c9c9c" />
<rect x="1168" y="257" width="1" height="12" fill="#9c9c9c" />
<rect x="1182" y="257" width="1" height="12" fill="#9c9c9c" />
<rect x="1168" y="268" width="15" height="1" fill="#9c9c9c" />
<polygon points="1171,260.5 1180,260.5 1175.5,265.5" fill="#707070" stroke="#333" stroke-width="0.6" shape-rendering="auto"/>
<rect x="1168" y="357" width="15" height="12" fill="#fff" />
<rect x="1168" y="357" width="15" height="1" fill="#9c9c9c" />
<rect x="1168" y="357" width="1" height="12" fill="#9c9c9c" />
<rect x="1182" y="357" width="1" height="12" fill="#9c9c9c" />
<rect x="1168" y="368" width="15" height="1" fill="#9c9c9c" />
<polygon points="1171,360.5 1180,360.5 1175.5,365.5" fill="#707070" stroke="#333" stroke-width="0.6" shape-rendering="auto"/>
<rect x="1168" y="457" width="15" height="12" fill="#fff" />
<rect x="1168" y="457" width="15" height="1" fill="#9c9c9c" />
<rect x="1168" y="457" width="1" height="12" fill="#9c9c9c" />
<rect x="1182" y="457" width="1" height="12" fill="#9c9c9c" />
<rect x="1168" y="468" width="15" height="1" fill="#9c9c9c" />
<polygon points="1171,460.5 1180,460.5 1175.5,465.5" fill="#707070" stroke="#333" stroke-width="0.6" shape-rendering="auto"/>
<rect x="1123.5" y="338.5" width="38" height="14" fill="#fff" stroke="#000" stroke-width="1"/>
</g>
<text class="n" transform="scale(0.800,1)" x="1415.0 1422.5 1430.0 1437.5 1445.0 1452.5" y="45">13,200</text>
<text class="n" transform="scale(0.800,1)" x="1415.0 1422.5 1430.0 1437.5 1445.0 1452.5" y="85">13,050</text>
<text class="n" transform="scale(0.800,1)" x="1415.0 1422.5 1430.0 1437.5 1445.0 1452.5" y="126">12,900</text>
<text class="n" transform="scale(0.800,1)" x="1415.0 1422.5 1430.0 1437.5 1445.0 1452.5" y="166">12,750</text>
<text class="n" transform="scale(0.800,1)" x="1415.0 1422.5 1430.0 1437.5 1445.0 1452.5" y="207">12,600</text>
<text class="n" transform="scale(0.800,1)" x="1415.0 1422.5 1430.0 1437.5 1445.0 1452.5" y="248">12,450</text>
<text class="n" transform="scale(0.800,1)" x="1415.0 1422.5 1430.0 1437.5 1445.0 1452.5" y="279">380.00</text>
<text class="n" transform="scale(0.800,1)" x="1415.0 1422.5 1430.0 1437.5 1445.0 1452.5" y="316">170.00</text>
<text class="n" transform="scale(0.800,1)" x="1415.0 1422.5 1430.0 1437.5 1445.0" y="379">95.00</text>
<text class="n" transform="scale(0.800,1)" x="1415.0 1422.5 1430.0 1437.5" y="418">5.00</text>
<text class="n" transform="scale(0.800,1)" x="1415.0 1422.5 1430.0 1437.5 1445.0 1452.5" y="479">100.00</text>
<text class="n" transform="scale(0.800,1)" x="1415.0 1422.5 1430.0 1437.5 1445.0" y="517">45.00</text>
<text x="1126" y="351" font-family="'Liberation Sans','IPAGothic',sans-serif" font-size="16" fill="#000" textLength="9" lengthAdjust="spacingAndGlyphs">×</text>
<text class="n" transform="scale(0.800,1)" x="1431.2 1438.8 1446.2" y="350">100</text>
<text class="n" transform="scale(0.800,1)" x="22.5 30.0 37.5 45.0 52.5" y="575">02:40</text>
<text class="n" transform="scale(0.800,1)" x="82.5 90.0 97.5 105.0 112.5" y="575">09:20</text>
<text class="n" transform="scale(0.800,1)" x="202.5 210.0 217.5 225.0 232.5" y="575">10:40</text>
<text class="n" transform="scale(0.800,1)" x="322.5 330.0 337.5 345.0 352.5" y="575">12:00</text>
<text class="n" transform="scale(0.800,1)" x="442.5 450.0 457.5 465.0 472.5" y="575">13:20</text>
<text class="n" transform="scale(0.800,1)" x="562.5 570.0 577.5 585.0 592.5" y="575">14:40</text>
<text class="n" transform="scale(0.800,1)" x="697.5 705.0 712.5 720.0 727.5" y="575">17:20</text>
<text class="n" transform="scale(0.800,1)" x="817.5 825.0 832.5 840.0 847.5" y="575">18:40</text>
<text class="n" transform="scale(0.800,1)" x="937.5 945.0 952.5 960.0 967.5" y="575">20:00</text>
<text class="n" transform="scale(0.800,1)" x="1057.5 1065.0 1072.5 1080.0 1087.5" y="575">21:20</text>
<text class="n" transform="scale(0.800,1)" x="1177.5 1185.0 1192.5 1200.0 1207.5" y="575">22:40</text>
<text class="n" transform="scale(0.800,1)" x="1297.5 1305.0 1312.5 1320.0 1327.5" y="575">06/08</text>
<text class="k" x="7 19" y="34">日経</text>
<text class="n" transform="scale(0.634,1)" x="53.6 63.1 72.6 82.0 91.5 101.0 110.4" y="34">225mini</text>
<text class="n" transform="scale(0.800,1)" x="102.5 110.0 117.5 125.0 132.5 140.0" y="34">13/06(</text>
<text class="n" transform="scale(0.800,1)" x="155.0" y="34">5</text>
<text class="k" x="127" y="34">分</text>
<text class="n" transform="scale(0.800,1)" x="177.5" y="34">,</text>
<text class="n" transform="scale(0.800,1)" x="192.5 200.0 207.5 215.0 222.5 230.0 237.5 245.0 252.5 260.0" y="34">2013/06/06</text>
<text class="n" transform="scale(0.800,1)" x="275.0" y="34">-</text>
<text class="n" transform="scale(0.800,1)" x="290.0 297.5 305.0 312.5 320.0 327.5 335.0 342.5 350.0 357.5" y="34">2013/06/10</text>
<text class="n" transform="scale(0.800,1)" x="372.5" y="34">)</text>
<text class="k" x="321 333 345 357" y="34">移動平均</text>
<text class="n" transform="scale(0.800,1)" x="465.0" y="34">(</text>
<text class="n" transform="scale(0.731,1)" x="525.1 533.3 541.5 549.7 557.9 566.1" y="34">Close,</text>
<text class="n" transform="scale(0.800,1)" x="532.5 540.0 547.5" y="34">150</text>
<text class="n" transform="scale(0.800,1)" x="562.5" y="34">)</text>
<text class="k" x="473 485 497 509 521" y="34">一目均衡表</text>
<text class="n" transform="scale(0.800,1)" x="670.0" y="34">(</text>
<text class="n" transform="scale(0.800,1)" x="685.0 692.5" y="34">9,</text>
<text class="n" transform="scale(0.800,1)" x="707.5 715.0 722.5" y="34">26,</text>
<text class="n" transform="scale(0.800,1)" x="737.5 745.0" y="34">52</text>
<text class="n" transform="scale(0.800,1)" x="760.0" y="34">)</text>
<text class="k" x="631 643 655 667" y="34">移動平均</text>
<text class="n" transform="scale(0.800,1)" x="852.5" y="34">(</text>
<text class="n" transform="scale(0.731,1)" x="949.0 957.2 965.4 973.6 981.8 990.0" y="34">Close,</text>
<text class="n" transform="scale(0.800,1)" x="920.0 927.5" y="34">40</text>
<text class="n" transform="scale(0.800,1)" x="942.5" y="34">)</text>
<text class="k" x="777 789 801 813" y="34">移動平均</text>
<text class="n" transform="scale(0.800,1)" x="1035.0" y="34">(</text>
<text class="n" transform="scale(0.731,1)" x="1148.6 1156.8 1165.0 1173.3 1181.5 1189.7" y="34">Close,</text>
<text class="n" transform="scale(0.800,1)" x="1102.5 1110.0" y="34">75</text>
<text class="n" transform="scale(0.800,1)" x="1125.0" y="34">)</text>
<text class="k" x="923 935 947 959" y="34">移動平均</text>
<text class="n" transform="scale(0.800,1)" x="1217.5" y="34">(</text>
<text class="n" transform="scale(0.731,1)" x="1348.3 1356.5 1364.7 1372.9 1381.1 1389.3" y="34">Close,</text>
<text class="n" transform="scale(0.800,1)" x="1285.0 1292.5" y="34">75</text>
<text class="n" transform="scale(0.800,1)" x="1307.5" y="34">)</text>
<text class="k" x="7 19 31 43" y="48">移動平均</text>
<text class="n" transform="scale(0.800,1)" x="72.5" y="48">(</text>
<text class="n" transform="scale(0.731,1)" x="95.7 103.9 112.1 120.3 128.5 136.7" y="48">Close,</text>
<text class="n" transform="scale(0.800,1)" x="140.0" y="48">5</text>
<text class="n" transform="scale(0.800,1)" x="155.0" y="48">)</text>
<text class="k" x="147 159 171 183" y="48">移動平均</text>
<text class="n" transform="scale(0.800,1)" x="247.5" y="48">(</text>
<text class="n" transform="scale(0.731,1)" x="287.2 295.4 303.6 311.8 320.0 328.2" y="48">Close,</text>
<text class="n" transform="scale(0.800,1)" x="315.0 322.5" y="48">25</text>
<text class="n" transform="scale(0.800,1)" x="337.5" y="48">)</text>
<text class="k" x="293 305 317 329" y="48">移動平均</text>
<text class="n" transform="scale(0.800,1)" x="430.0" y="48">(</text>
<text class="n" transform="scale(0.731,1)" x="486.8 495.0 503.2 511.4 519.6 527.8" y="48">Close,</text>
<text class="n" transform="scale(0.800,1)" x="497.5 505.0" y="48">20</text>
<text class="n" transform="scale(0.800,1)" x="520.0" y="48">)</text>
<text class="k" x="439 451 463 475" y="48">移動平均</text>
<text class="n" transform="scale(0.800,1)" x="612.5" y="48">(</text>
<text class="n" transform="scale(0.731,1)" x="686.4 694.7 702.9 711.1 719.3 727.5" y="48">Close,</text>
<text class="n" transform="scale(0.800,1)" x="680.0 687.5" y="48">10</text>
<text class="n" transform="scale(0.800,1)" x="702.5" y="48">)</text>
<text class="k" x="7 19 31" y="268">出来高</text>
<text class="n" transform="scale(0.634,1)" x="15.8 25.2 34.7 44.2 53.6" y="368">MACD(</text>
<text class="n" transform="scale(0.800,1)" x="57.5 65.0 72.5" y="368">12,</text>
<text class="n" transform="scale(0.800,1)" x="87.5 95.0 102.5" y="368">26,</text>
<text class="n" transform="scale(0.800,1)" x="117.5" y="368">9</text>
<text class="n" transform="scale(0.800,1)" x="132.5" y="368">)</text>
<text class="k" x="7 19 31 43 55 67 79 91 103 115 127 139 151" y="469">スロー・ストキャスティクス</text>
<text class="n" transform="scale(0.800,1)" x="207.5" y="469">(</text>
<text class="n" transform="scale(0.800,1)" x="222.5 230.0 237.5" y="469">14,</text>
<text class="n" transform="scale(0.800,1)" x="252.5 260.0" y="469">3,</text>
<text class="n" transform="scale(0.800,1)" x="275.0 282.5 290.0" y="469">80,</text>
<text class="n" transform="scale(0.800,1)" x="305.0 312.5" y="469">20</text>
<text class="n" transform="scale(0.800,1)" x="327.5" y="469">)</text>
</svg></div></body></html>
